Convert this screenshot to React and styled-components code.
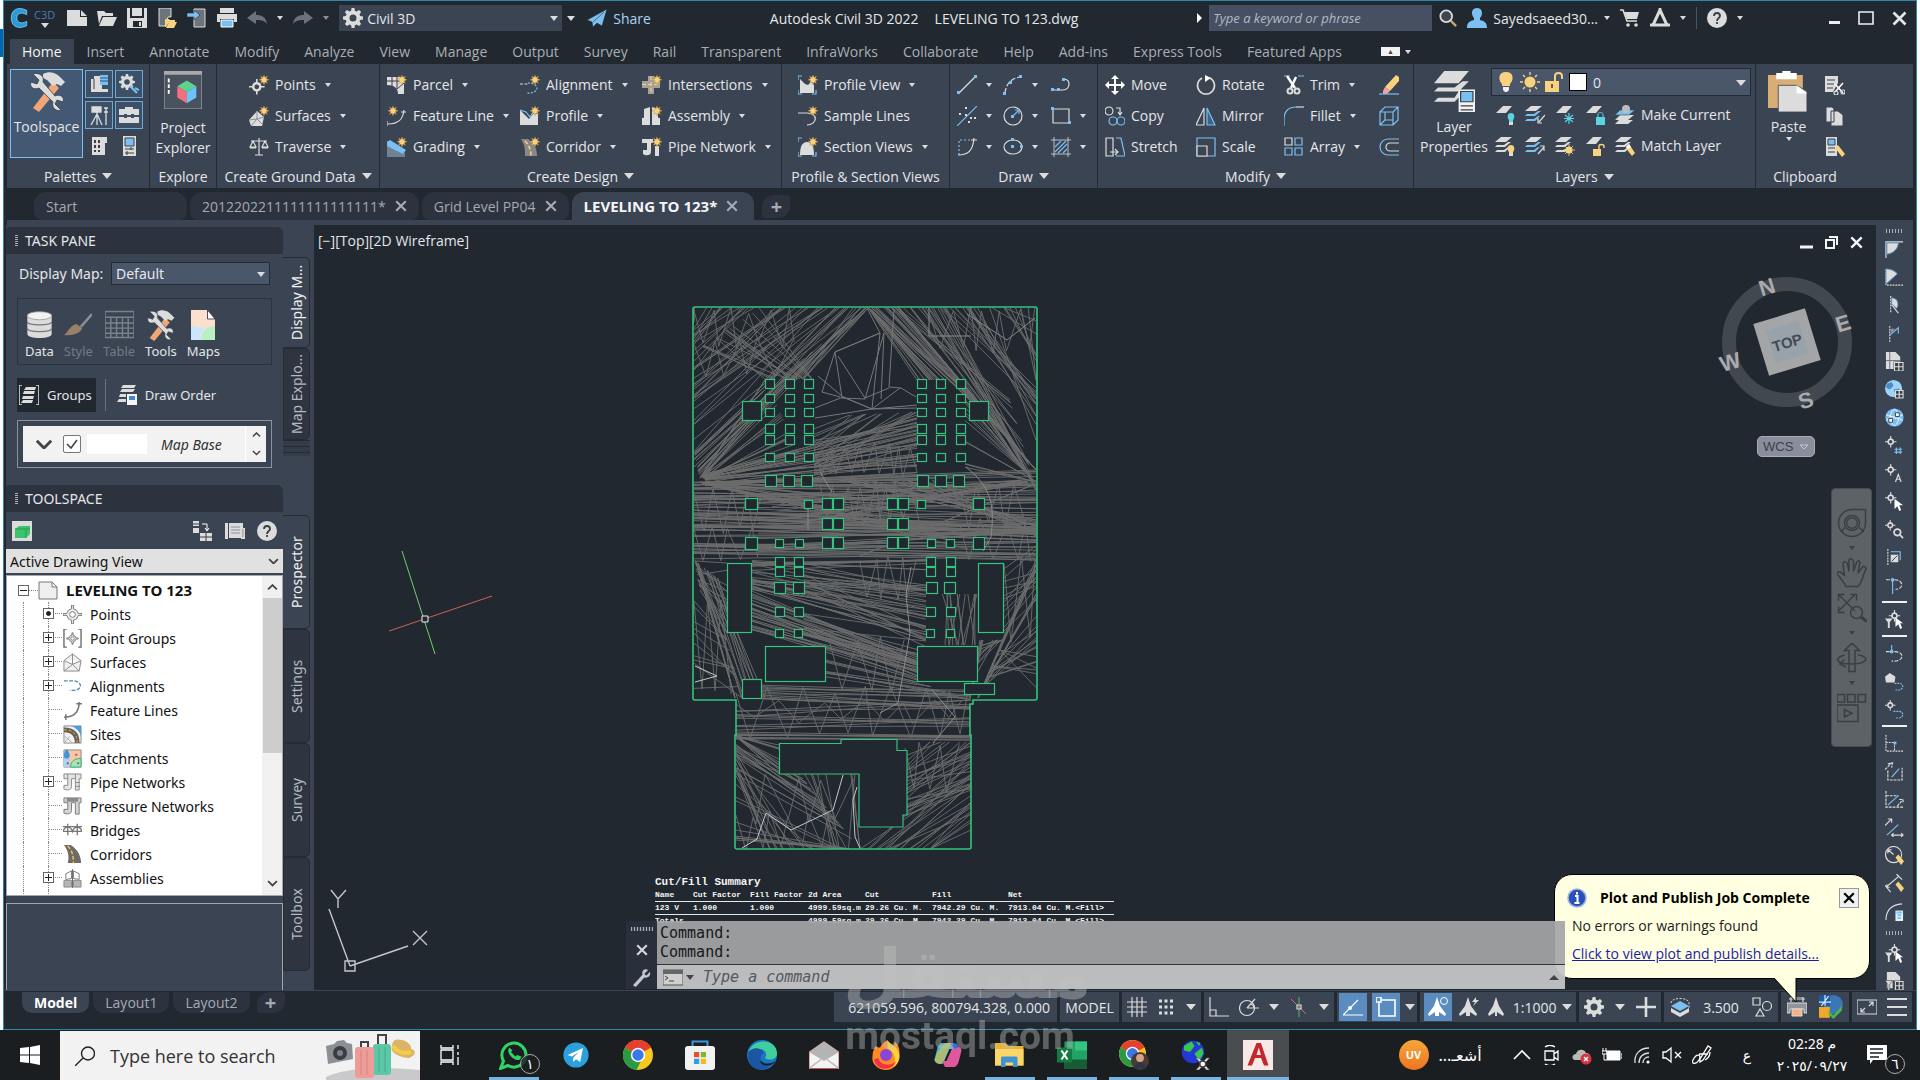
import styled, { createGlobalStyle, css } from "styled-components";

const GlobalStyle = createGlobalStyle`
	* {
		box-sizing: border-box;
	}
	body {
		margin: 0;
		font-family: "Open Sans", "Noto Sans", sans-serif;
		font-size: 14px;
		color: #e4e6e9;
		overflow: hidden;
	}
	button,
	input,
	select {
		font: inherit;
		color: inherit;
		margin: 0;
		padding: 0;
		border: 0;
		background: none;
		border-radius: 0;
	}
	ul {
		list-style: none;
		margin: 0;
		padding: 0;
	}
	svg {
		display: block;
		flex: none;
	}
`;

/* ---------- icons, all on a 20 x 20 grid ---------- */

const W = "#dcdcdc";
const B = "#7cc0f2";
const Y = "#f8d27e";
const G = "#3a3f47";

const line = { fill: "none", stroke: W, strokeWidth: 1.2 };
const blue = { fill: "none", stroke: B, strokeWidth: 1.2 };
const STAR =
	"M15 0l1 2.6 2.4-1.3-1.2 2.5 2.8 1-2.8 1 1.2 2.5-2.4-1.2-1 2.7-1-2.7-2.4 1.2 1.2-2.5-2.8-1 2.8-1-1.2-2.5 2.4 1.3z";
const GEAR =
	"M8.6 0h2.8l.5 2.8 1.7.7L16 1.9l2.1 2.1-1.6 2.4.7 1.7 2.8.5v2.8l-2.8.5-.7 1.7 1.6 2.4-2.1 2.1-2.4-1.6-1.7.7-.5 2.8H8.600l-.5-2.800-1.700-.7L4 18.100 1.900 16l1.600-2.400-.7-1.700L0 11.400V8.600l2.800-.5.7-1.700L1.900 4 4 1.900l2.400 1.600 1.700-.7zM10 6.500a3.500 3.500 0 100 7 3.500 3.500 0 000-7z";
const POINT = "M9 0h2v4a6 6 0 015 5h4v2h-4a6 6 0 01-5 5v4H9v-4a6 6 0 01-5-5H0V9h4a6 6 0 015-5zM10 7a3 3 0 100 6 3 3 0 000-6z";

const Star = () => <path d={STAR} fill={Y} stroke="#c08a3a" strokeWidth=".4" />;
const Sheets = ({ mid = W }) => (
	<>
		<path d="M6 1h11l-6 5H0z" fill={W} />
		<path d="M13 6h3l-6 5H0l2-2h7z" fill={mid} />
		<path d="M13 11h2l-5 5H0l2-2h7z" fill={mid} />
	</>
);

const Wrenches = () => (
	<>
		<path d="M13 5l3 3L6 20l-3-2z" fill="#f0a676" />
		<path d="M8 1c4-2 7 0 9 2l2 2-2 2-2-1-2 1-3-3-2-1z" fill={W} />
		<path d="M3 1l3 3-1 2-3-1C1 8 4 9 6 8l7 7c-1 3 2 5 4 4l-3-3 1-2 3 1c1-3-2-4-4-3L8 5c1-3-2-5-5-4z" fill={W} stroke={G} strokeWidth=".4" />
	</>
);

const ICONS = {
	logo: <path d="M17 3C8-1 3 3 3 10s5 11 14 7v-4c-5 3-9 1-9-3s4-6 9-3z" fill="#2d9ad8" stroke="#6fc8ef" strokeWidth=".8" />,
	newFile: <path d="M0 2h13v7h7v9H0zM14 2l6 6h-6z" fill={W} />,
	open: <path d="M0 3h7l2 2h7v3H5L2 16zM6 9h14l-4 9H2z" fill={W} />,
	save: <path d="M0 0h3v10h14V0h3v20H0zM5 0h10v8H5zM6 13v6h9v-6zM12 14h2v4h-2z" fill={W} fillRule="evenodd" />,
	openWeb: (
		<>
			<path d="M2 0h12v9h-3l-3 9H2z" fill="#6e747c" stroke={W} />
			<path d="M8 11h4l1 1h5v2h-6l-3 5H8zM12 14h8l-3 6H9z" fill={Y} />
		</>
	),
	saveWeb: (
		<>
			<path d="M7 1h11v18H7z" fill="#6e747c" stroke={W} />
			<path d="M0 5h7V2l6 5-6 5V9H0z" fill={B} stroke="#252b34" strokeWidth=".6" />
		</>
	),
	print: (
		<>
			<path d="M3 0h14v5H3zM0 6h20v8h-3v-3H3v3H0z" fill={W} />
			<path d="M4 12h12v7H4z" fill={B} stroke="#fff" />
		</>
	),
	undo: <path d="M9 3v4c6 0 10 2 11 9-2-3-5-4-11-4v4L0 10z" fill="#6b727c" />,
	redo: <path d="M11 3v4C5 7 1 9 0 16c2-3 5-4 11-4v4l9-6z" fill="#6b727c" />,
	gear: <path d={GEAR} fill={W} fillRule="evenodd" />,
	share: <path d="M20 1L0 12l5 2 1 5 4-4 5 3zM17 4L6 14" fill={B} stroke="#252b34" strokeWidth=".6" />,
	find: (
		<>
			<path d="M13 13l6 6" stroke="#c8a47a" strokeWidth="2.600" />
			<circle cx="8" cy="8" r="6.500" fill="#3f454f" stroke={W} strokeWidth="2" />
		</>
	),
	user: <path d="M10 0c4 0 5 3 5 5s-1 4-2 5v2c4 1 7 2 7 8H0c0-6 3-7 7-8v-2C6 9 5 7 5 5s1-5 5-5z" fill={B} />,
	cart: (
		<>
			<path d="M0 2h3l4 11h10" fill="none" stroke={W} strokeWidth="1.600" />
			<path d="M4 4h15l-2 7H7z" fill={W} />
			<circle cx="8" cy="17" r="1.800" fill={W} />
			<circle cx="16" cy="17" r="1.800" fill={W} />
		</>
	),
	autodesk: <path d="M10 2L3 17h14zM10 1v3M1 17h5M14 17h5" fill="none" stroke={W} strokeWidth="3" strokeLinecap="round" />,
	help: (
		<>
			<circle cx="10" cy="10" r="10" fill={W} />
			<path d="M7 8c0-4 6-4 6 0 0 2-3 2-3 5M10 14v2" fill="none" stroke={G} strokeWidth="1.800" />
		</>
	),
	tools: <Wrenches />,
	toolbook: (
		<>
			<path d="M2 5h3v-3h8v13h6v3H2z" fill={W} />
			<path d="M11 1h8v10h-8z" fill={B} />
			<path d="M11 4h8M11 7h8" stroke="#2f5878" />
			<path d="M5 5v10" stroke={G} />
		</>
	),
	gearTool: (
		<>
			<g transform="scale(.8)"><path d={GEAR} fill={W} fillRule="evenodd" /></g>
			<path d="M11 12l7 7M16 14l4 2" stroke={B} strokeWidth="2" />
		</>
	),
	survey: <path d="M3 2h9v5H3zM8 7v4M8 9L2 20M8 9l5 11M8 9v11M15 3h4M17 3v17M15 7h4" fill={W} stroke={W} strokeWidth="1.300" />,
	toolbox: <path d="M6 4V2h8v2h6v6h-5V9h-3v1H8V9H5v1H0V4zM0 12h5v1h3v-1h4v1h3v-1h5v6H0z" fill={W} />,
	sheets: (
		<>
			<path d="M3 1h15v6h-2v12H3z" fill={W} />
			<path d="M6 4v12M10 4v12" stroke={G} strokeWidth="2" strokeDasharray="3 2" />
		</>
	),
	props: (
		<>
			<path d="M4 0h13v20H4z" fill={W} />
			<path d="M6 2h9v8H6z" fill={B} stroke={G} />
			<path d="M6 13h9M6 17h9M12 11v3M8 15v4" stroke={G} />
		</>
	),
	cube: (
		<>
			<path d="M0 0h20v20H0z" fill="#49525e" stroke="#aaa" strokeWidth=".6" />
			<path d="M0 0h20v2H0z" fill="#aaa" />
			<path d="M2 4h1v2H2zM2 7h1v2H2zM2 10h1v2H2z" fill="#fff" />
			<path d="M12 5l5 3-5 3-5-3z" fill="#5cd48c" />
			<path d="M7 8l5 3v6l-5-3z" fill="#f4707e" />
			<path d="M17 8l-5 3v6l5-3z" fill="#6cc4ff" />
		</>
	),
	points: (
		<>
			<g transform="translate(0 4) scale(.78)"><path d={POINT} fill={W} fillRule="evenodd" /></g>
			<Star />
		</>
	),
	surfaces: (
		<>
			<path d="M8 5l7 6-2 9H2l-2-6z" fill={W} />
			<path d="M8 5v8M0 14l8-1 6 6M2 20l6-7 7-2" stroke="#8b8f95" fill="none" />
			<Star />
		</>
	),
	traverse: <path d="M2 4h16M10 1v17M6 18h8M4 4L1 10h6zM16 4l-3 6h6zM1 11h6M13 11h6" {...line} />,
	parcel: (
		<>
			<path d="M0 2h17v17h-6c0-6-4-9-11-9z" fill={W} />
			<path d="M5 2v9M10 2v12M17 8l-7 6M0 6h17" stroke={G} fill="none" />
			<Star />
		</>
	),
	featureLine: (
		<>
			<path d="M1 18c10 0 15-4 16-14M0 15v5M14 6h5" {...line} />
			<g transform="translate(-9 0)"><Star /></g>
		</>
	),
	grading: (
		<>
			<path d="M0 4l18 12v4L0 20z" fill="#6e8294" />
			<path d="M0 5l3-2 16 10-3 4L0 9z" fill={B} />
			<Star />
		</>
	),
	alignment: (
		<>
			<path d="M0 9h8" {...line} strokeDasharray="3 1.500" />
			<path d="M8 8c12 0 12 11-1 10" {...blue} strokeDasharray="2 1.500" />
			<Star />
		</>
	),
	profile: (
		<>
			<path d="M0 4l5 5 4 4 4-5h5v11H0z" fill={W} />
			<path d="M0 4l6 2 4 5 4-6" {...blue} />
			<Star />
		</>
	),
	corridor: (
		<>
			<path d="M1 2h7c7 4 9 11 9 17H5C5 12 5 8 1 2z" fill="#8b8784" />
			<path d="M5 4c4 4 6 9 6 15" stroke={Y} strokeWidth="1.500" strokeDasharray="4 2" fill="none" />
			<Star />
		</>
	),
	intersections: (
		<>
			<path d="M6 1h6v5h6v7h-6v6H6v-6H0V6h6z" fill="#a6a19a" />
			<path d="M9 1v18M0 9.500h18" stroke={Y} strokeDasharray="4 2" />
			<Star />
		</>
	),
	assembly: (
		<>
			<path d="M2 3l6-2v9l-6 2zM0 12l8-2v9H0zM10 1l6 2v9l-6-2zM10 10l8 2v7h-8z" fill={W} />
			<path d="M9 0v20" stroke={G} />
			<Star />
		</>
	),
	pipe: (
		<>
			<path d="M0 2h11v4H9v9c0 4-6 4-8 2v-4h4V6H0zM13 9h4v10h-4z" fill={W} />
			<Star />
		</>
	),
	profileView: (
		<>
			<path d="M0 5V1h4M0 15v4h4M18 15v4h-4" {...blue} />
			<path d="M2 4l5 5 3 1 3-3 3 3v8H2z" fill={W} />
			<Star />
		</>
	),
	sampleLines: (
		<>
			<path d="M0 7h9M9 7c12 0 10 12 0 12" {...line} />
			<Star />
		</>
	),
	sectionViews: (
		<>
			<path d="M0 5V1h4M0 15v4h4M18 15v4h-4" {...blue} />
			<path d="M2 18c0-8 2-13 7-13s7 5 7 13z" fill={W} />
			<Star />
		</>
	),
	drawLine: (
		<>
			<path d="M2 18L18 2" {...line} />
			<path d="M0 16h3v3H0zM17 0h3v3h-3z" fill={B} />
		</>
	),
	drawArc: (
		<>
			<path d="M2 18C3 9 8 3 18 2" {...line} strokeDasharray="5 2" />
			<path d="M0 17h3v3H0zM6 6h3v3H6zM16 0h3v3h-3z" fill={B} />
		</>
	),
	drawPoly: (
		<>
			<path d="M2 15h9c9 0 9-11 2-11" {...line} />
			<path d="M0 13h3v3H0zM6 13h3v3H6zM11 3h3v3h-3z" fill={B} />
		</>
	),
	drawXline: (
		<>
			<path d="M0 20L20 0" {...blue} />
			<path d="M2 7h2v2H2zM8 1h2v2H8zM8 8h2v2H8zM11 15h2v2h-2zM17 11h2v2h-2zM13 11h2v2h-2z" fill={W} />
		</>
	),
	drawCircle: (
		<>
			<circle cx="10" cy="10" r="9" {...line} />
			<path d="M9 11l6-6M12 4h4v4" {...blue} />
			<path d="M8 9h3v3H8z" fill={B} />
		</>
	),
	drawRect: (
		<>
			<path d="M2 3h16v14H2z" {...line} />
			<path d="M0 1h3v3H0zM17 15h3v3h-3z" fill={B} />
		</>
	),
	drawSpline: (
		<>
			<path d="M2 18V3h13" {...blue} strokeDasharray="2 2" />
			<path d="M1 18c10 0 15-4 16-17M14 3h6" {...line} />
		</>
	),
	drawEllipse: (
		<>
			<ellipse cx="10" cy="10" rx="9" ry="7" {...line} />
			<path d="M8 8h3v3H8zM8 1h3v3H8zM17 8h3v3h-3z" fill={B} />
		</>
	),
	drawHatch: (
		<>
			<path d="M0 3h20M0 17h20M3 0v20M17 0v20" {...line} strokeWidth=".8" />
			<path d="M4 10l6-6M4 15L15 4M7 16l9-9M12 16l4-4" {...blue} />
		</>
	),
	move: <path d="M10 0l4 4h-3v5h5V6l4 4-4 4v-3h-5v5h3l-4 4-4-4h3v-5H4v3l-4-4 4-4v3h5V4H6z" fill="#fff" />,
	copy: (
		<>
			<circle cx="4" cy="5" r="4" {...line} />
			<path d="M11 2h4v6M13 6l2 3 2-3" {...line} />
			<circle cx="8" cy="15" r="4" {...blue} />
			<circle cx="16" cy="15" r="4" {...blue} />
		</>
	),
	stretch: (
		<>
			<path d="M1 1h7v18H1z" {...line} />
			<path d="M11 1h5l4 18h-9" {...blue} />
			<path d="M5 15h7M10 12l3 3-3 3" {...line} />
		</>
	),
	rotate: (
		<>
			<path d="M14 3a8.500 8.500 0 11-8 0" {...line} strokeWidth="1.600" />
			<path d="M9 0l6 3-6 4z" fill="#fff" />
		</>
	),
	mirror: (
		<>
			<path d="M8 2v17H0z" {...line} />
			<path d="M11 2v17h8z" {...blue} fill="#3b6489" />
		</>
	),
	scale: (
		<>
			<path d="M1 1h18v18H1z" {...blue} />
			<path d="M1 9h10v10H1z" {...line} fill="#3b4453" />
		</>
	),
	trim: (
		<>
			<path d="M0 1h6M14 1h6" {...blue} />
			<path d="M3 1l8 12M12 2L7 13" stroke="#fff" strokeWidth="2.400" />
			<circle cx="6" cy="16" r="2.500" {...line} strokeWidth="2" />
			<circle cx="13" cy="16" r="2.500" {...line} strokeWidth="2" />
		</>
	),
	fillet: (
		<>
			<path d="M0 20v-7C0 5 5 1 12 1" {...blue} />
			<path d="M12 1h8" {...line} />
		</>
	),
	array: (
		<>
			<path d="M1 1h7v7H1z" {...line} />
			<path d="M11 1h7v7h-7zM1 11h7v7H1zM11 11h7v7h-7z" {...blue} />
		</>
	),
	erase: (
		<>
			<path d="M17 0l3 2v4l-9 10-5-4z" fill={Y} />
			<path d="M6 12l5 4-3 3H4v-3z" fill="#f4a0a8" />
			<path d="M0 19h20" {...blue} />
		</>
	),
	box3d: <path d="M1 6h13v13H1zM1 6l5-5h13l-5 5M19 1v13l-5 5M6 6v8l-5 5M6 14h8" {...blue} />,
	offset: (
		<>
			<path d="M20 2H9a8 8 0 000 16h11" {...blue} />
			<path d="M20 6h-9a4 4 0 000 8h9" {...line} />
		</>
	),
	layerProps: (
		<>
			<path d="M5 0h12l-5 6H0zM14 5h3l-5 5H0l2-2h8zM12 10h3l-5 5H0l2-2h8z" fill={W} />
			<path d="M12 9h8v11h-8z" fill="#f2f2f2" />
			<path d="M13 10h6v5h-6z" fill={B} stroke={G} strokeWidth=".6" />
			<path d="M13 17h6M13 19h6" stroke={G} strokeWidth=".6" />
		</>
	),
	bulb: (
		<>
			<path d="M10 0c8 0 8 8 4 12v2H6v-2C2 8 2 0 10 0z" fill={Y} />
			<path d="M7 15h6v3l-2 2H9l-2-2z" fill="#f2f2f2" />
		</>
	),
	sun: (
		<>
			<circle cx="10" cy="10" r="5.500" fill={Y} />
			<path d="M10 0v3M10 17v3M0 10h3M17 10h3M3 3l2 2M15 15l2 2M17 3l-2 2M5 15l-2 2" stroke={Y} strokeWidth="1.400" />
		</>
	),
	unlock: (
		<>
			<path d="M1 9h14v11H1z" fill={Y} />
			<path d="M11 9V4c0-4 7-4 7 0v3" fill="none" stroke={Y} strokeWidth="2" />
			<path d="M8 12v4" stroke={G} strokeWidth="1.600" />
		</>
	),
	layOff: (
		<>
			<path d="M8 1h9l-6 7H1z" fill={W} />
			<path d="M16 8c4 0 4 5 2 7v2h-4v-2c-2-2-2-7 2-7z" fill="#5cd3e0" />
			<path d="M14 17h4v3h-4z" fill={W} />
		</>
	),
	layIso: (
		<>
			<Sheets mid={B} />
			<path d="M20 10l-6 7M13 13v5h4" {...line} />
		</>
	),
	layFreeze: (
		<>
			<path d="M8 1h9l-6 7H1z" fill={W} />
			<path d="M14 8v11M10 10l8 7M18 10l-8 7M9 13.500h10" stroke="#5cd3e0" strokeWidth="1.200" />
		</>
	),
	layLock: (
		<>
			<path d="M8 1h9l-6 7H1z" fill={W} />
			<path d="M11 12h9v8h-9z" fill="#5cd3e0" />
			<path d="M13 12V9c0-2 5-2 5 0v3" fill="none" stroke="#5cd3e0" />
		</>
	),
	layCurrent: (
		<>
			<path d="M5 10h14l-6 5H0zM4 15h14l-5 4H0z" fill={W} />
			<path d="M5 5h15l-6 5H0z" fill={B} stroke="#3b4453" strokeWidth=".6" />
			<circle cx="11" cy="4" r="4" fill="#b9bdc2" />
		</>
	),
	layOn: (
		<>
			<Sheets />
			<path d="M16 9c4 0 4 5 2 7v1h-4v-1c-2-2-2-7 2-7z" fill={Y} />
			<path d="M14 17h4v3h-4z" fill={W} />
		</>
	),
	layUniso: (
		<>
			<Sheets mid={B} />
			<path d="M13 18l6-7M15 10h4v5" {...line} />
		</>
	),
	layThaw: (
		<>
			<Sheets />
			<circle cx="14" cy="14" r="3.500" fill={Y} />
			<path d="M14 8v12M8 14h12M10 10l8 8M18 10l-8 8" stroke={Y} strokeWidth=".8" />
		</>
	),
	layUnlock: (
		<>
			<path d="M8 1h9l-6 7H1z" fill={W} />
			<path d="M8 13h8v7H8z" fill={Y} />
			<path d="M14 13v-3c0-2 5-2 5 0v2" fill="none" stroke={Y} strokeWidth="1.400" />
		</>
	),
	layMatch: (
		<>
			<Sheets />
			<path d="M11 11l3-3 2 3 4 6-3 3-4-5z" fill={Y} />
			<path d="M11 11l3-3 2 3-3 2z" fill="#fff" />
		</>
	),
	paste: (
		<>
			<path d="M0 2h17v16H0z" fill="#d8ae74" />
			<path d="M4 1h3V0h4v1h3v3H4z" fill="#fff" />
			<path d="M5 7h9l5 3v10H5z" fill={W} stroke="#3b4453" strokeWidth=".4" />
			<path d="M14 7l5 4h-5z" fill="#fff" />
		</>
	),
	cut: (
		<>
			<path d="M0 1h13v7l-5 9H0z" fill={W} />
			<path d="M2 5h8M2 9h7M2 13h6" stroke={G} />
			<path d="M10 9l8 9M18 8l-8 9" stroke="#fff" strokeWidth="1.600" />
			<circle cx="11" cy="18" r="2" {...line} />
			<circle cx="18" cy="17" r="2" {...line} />
		</>
	),
	copyClip: <path d="M1 1h6l2 2v13H1zM6 5h7l5 4v11H6z" fill={W} stroke="#3b4453" />,
	matchProps: (
		<>
			<path d="M1 0h11v19H1z" fill={W} />
			<path d="M3 2h7v6H3z" fill={B} stroke={G} />
			<path d="M3 11h7M3 15h7" stroke={G} />
			<path d="M10 11l3-3 7 9-3 3z" fill={Y} />
		</>
	),
	database: (
		<>
			<path d="M1 3v14c0 4 18 4 18 0V3z" fill={W} />
			<path d="M1 8c0 3 18 3 18 0M1 13c0 3 18 3 18 0" fill="none" stroke="#777" />
			<ellipse cx="10" cy="3.500" rx="9" ry="3" fill="#f2f2f2" stroke="#999" strokeWidth=".6" />
		</>
	),
	brush: (
		<>
			<path d="M20 3l-8 9" stroke="#8b8f95" strokeWidth="1.800" />
			<path d="M13 13c-2 4-6 5-13 5 3-2 4-7 9-8z" fill="#9a8068" />
		</>
	),
	table: <path d="M0 1h20v18H0zM0 5h20M0 9h20M0 12.500h20M0 16h20M4 5v14M8 5v14M12 5v14M16 5v14" fill="none" stroke="#7b818b" />,
	maps: (
		<>
			<path d="M2 0h11l5 6v14H2z" fill="#fbe0cd" />
			<path d="M2 10c4 2 6 2 9 1l-3 9H2z" fill="#cbe6fb" />
			<path d="M18 11c-6 0-9 3-9 9h9z" fill="#b8f0c4" />
			<path d="M13 0v6h5z" fill="#fff" stroke={G} strokeWidth=".6" />
		</>
	),
	groups: (
		<>
			<path d="M3 0H0v20h3M17 0h3v20h-3" {...line} strokeWidth="1.600" />
			<path d="M7 2h10l-1 3H5zM5 6h11l-1 3H4zM4 11h11l-1 3H3zM4 15h10l-1 3H2z" fill={W} />
		</>
	),
	drawOrder: (
		<>
			<path d="M6 0h13l-2 3H4zM5 4h13l-2 3H3zM3 9h6v3H2zM2 14h7v3H0z" fill={W} />
			<path d="M10 9h10v11H10z" fill="#f4f4f4" />
			<path d="M12 11h6v4h-6z" fill="#4285c8" />
		</>
	),
	greenCube: (
		<>
			<path d="M0 0h20v20H0z" fill={W} />
			<path d="M3 8l4-3h11v8l-4 4H3z" fill="#3cc46c" />
			<path d="M14 17V8h4M3 8h11" fill="none" stroke="#1f9848" strokeWidth=".8" />
		</>
	),
	treeView: (
		<>
			<path d="M0 0h6v5H0zM0 7h6v5H0zM7 12h12v8H7z" fill={W} />
			<path d="M9 3h5v6M12 7l2 3 2-3" stroke="#fff" fill="none" />
			<path d="M7 16h12M13 12v8M0 3h6" stroke={G} />
		</>
	),
	panorama: (
		<>
			<path d="M0 2h3v16H0zM4 2h14v5h2v11h-4v-1H4z" fill={W} />
			<path d="M6 6h9M6 9h9M6 12h9M18 8v8" stroke="#8b8f95" />
		</>
	),
	docSheet: <path d="M1 2h13l5 5v12H1zM14 2v5h5" fill="#efefef" stroke="#777" />,
	tPoints: <path d={POINT} fill="#ececec" stroke="#777" fillRule="evenodd" />,
	tPointGroups: (
		<>
			<path d="M4 0H1v19h3M16 0h3v19h-3" fill="none" stroke="#666" strokeWidth="1.400" />
			<g transform="translate(4 4) scale(.6)"><path d={POINT} fill="#ececec" stroke="#777" strokeWidth="1.600" fillRule="evenodd" /></g>
		</>
	),
	tSurfaces: <path d="M10 1l9 7-2 11H1V8zM10 1v11M1 8l9 4 9-4M1 19l9-7 7 7" fill="#f0f0f0" stroke="#888" />,
	tAlignments: <path d="M1 4h9c11 0 11 10 1 10H7" fill="none" stroke="#5b87a8" strokeWidth="1.400" strokeDasharray="4 1.500" />,
	tFeature: <path d="M1 17c10 0 16-4 16-16M14 3h6M3 14v6" fill="none" stroke="#777" strokeWidth="1.600" />,
	tSites: (
		<>
			<path d="M1 1h18v18H1z" fill="#f2f2f2" stroke="#888" />
			<path d="M9 1h10v12c-1-6-4-9-10-12z" fill="#4a9ee0" />
			<path d="M1 5c9 0 14 4 14 14" fill="none" stroke="#666058" strokeWidth="5" />
			<path d="M1 5c9 0 14 4 14 14" fill="none" stroke="#e8b040" strokeDasharray="3 2" />
			<path d="M2 12l7 6M2 18l5-6" stroke="#aaa" />
		</>
	),
	tCatch: (
		<>
			<path d="M1 1h18v18H1z" fill="#f8c8a4" stroke="#888" />
			<path d="M1 9l6 1v9H1z" fill="#a9d4f4" />
			<path d="M19 10c-7 0-11 3-11 9h11z" fill="#9ee8b4" stroke="#4a8" />
			<path d="M4 0c5 7 3 10 0 10s-5-3 0-10z" fill="#3c94dc" />
			<path d="M13 5h2v2h-2zM15 14h2v2h-2zM4 14h2v2H4z" fill="#a55" />
		</>
	),
	tPipe: (
		<>
			<path d="M1 1h18v5h-2v12h-4V6H9v8c0 5-6 4-8 3v-4h4V6H1z" fill="#e4e4e4" stroke="#888" />
			<path d="M13 10h5M13 14h5M5 1v5M13 1v5" stroke="#888" />
		</>
	),
	tPressure: (
		<>
			<path d="M1 1h18v5h-2v12h-4V6H9v8c0 5-6 4-8 3v-4h4V6H1z" fill="#d4d4d4" stroke="#777" />
			<path d="M4 1h12v4H4z" fill="#8a8a8a" />
		</>
	),
	tBridges: <path d="M0 6h20M0 11h20M5 3v12M15 3v12M0 11c2-6 8-6 10 0 2-6 8-6 10 0" fill="none" stroke="#777" strokeWidth="1.400" />,
	tCorridors: (
		<>
			<path d="M1 0h7c8 5 11 12 11 19H5C7 12 5 5 1 0z" fill="#6e6a66" />
			<path d="M5 1c5 5 6 11 6 18" stroke="#f0c040" strokeWidth="1.600" strokeDasharray="4 2" fill="none" />
		</>
	),
	tAssemblies: (
		<>
			<path d="M3 5l6-3v8l-6 1zM17 5l-6-3v8l6 1z" fill="#fff" stroke="#777" />
			<path d="M1 12h8v7H1zM11 12h8v7h-8z" fill="#b5b5b5" stroke="#888" />
			<path d="M10 0v20" stroke="#666" />
		</>
	),
	/* right hand toolbar */
	r1: (
		<>
			<path d="M1 19V2h18" {...line} />
			<path d="M2 3h12c0 6-5 11-12 12z" fill={W} stroke="#5c94c4" />
		</>
	),
	r2: (
		<>
			<path d="M1 1v17h18" {...line} strokeDasharray="2 1" />
			<path d="M1 1c5 0 9 2 12 5L1 17z" fill={W} stroke="#5c94c4" />
		</>
	),
	r3: (
		<>
			<path d="M6 0v18" {...line} strokeDasharray="2 1" />
			<path d="M7 2c7 0 8 8 5 11l-5-5z" fill={W} stroke="#5c94c4" />
			<path d="M7 9l7 9" {...line} />
		</>
	),
	r4: (
		<>
			<path d="M5 2v18" {...line} strokeDasharray="2 1" />
			<path d="M5 12l9-8v6" {...blue} />
			<path d="M6 5h5l-5 5z" fill="#8b97a3" />
		</>
	),
	pageGrid: (
		<>
			<path d="M1 0h10l5 5v5H9v8H1z" fill={W} />
			<path d="M1 9h15M5 0v18" stroke="#6a7078" />
			<path d="M10 11h9v9h-9zM14.500 11v9M10 15.500h9" {...line} fill={G} />
		</>
	),
	globeGrid: (
		<>
			<circle cx="9" cy="9" r="9" fill="#9fd4fa" />
			<path d="M2 4l5-2 2 4-4 4-4-2zM9 10l6-1 1 5-4 3z" fill="#4b8cc2" />
			<path d="M11 11h8v8h-8zM15 11v8M11 15h8" {...line} fill={G} />
		</>
	),
	globeNet: (
		<>
			<circle cx="10" cy="10" r="9.500" fill="#7cc0f2" />
			<path d="M1 7c6 3 12 3 18 0M1 13c6-3 12-3 18 0M10 1c-6 5-6 13 0 18M10 1c6 5 6 13 0 18" fill="none" stroke="#e8f5ff" />
			<path d="M11 5h4v4h-4zM4 11h4v4H4z" fill="#fff" stroke={G} />
		</>
	),
	ptGrid: (
		<>
			<g transform="scale(.6)"><path d={POINT} fill={W} fillRule="evenodd" /></g>
			<path d="M12 12v7M16 12v7M10 14h8M10 17h8" {...blue} />
		</>
	),
	ptText: (
		<>
			<g transform="scale(.6)"><path d={POINT} fill={W} fillRule="evenodd" /></g>
			<path d="M11 19l3-8 3 8M12 16h4" {...line} />
		</>
	),
	ptArrow: (
		<>
			<g transform="scale(.6)"><path d={POINT} fill={W} fillRule="evenodd" /></g>
			<path d="M10 7l9 7h-4l2 5-2 1-2-5-3 3z" fill="#fff" />
		</>
	),
	ptZoom: (
		<>
			<g transform="scale(.55)"><path d={POINT} fill={W} fillRule="evenodd" /></g>
			<circle cx="13" cy="13" r="3.500" {...line} strokeWidth="1.800" />
			<path d="M16 16l3 3" {...line} strokeWidth="1.800" />
		</>
	),
	r12: (
		<>
			<path d="M3 1v18" {...line} strokeDasharray="2 1" />
			<path d="M6 4h10v9" {...blue} />
			<path d="M6 7h8v8H6z" fill={W} />
			<path d="M7 14l6-6" stroke={G} />
		</>
	),
	r13: (
		<>
			<path d="M1 4h5M10 4c10 0 10 10 1 10" {...line} strokeDasharray="4 1.500" />
			<path d="M8 4v15" {...blue} />
			<circle cx="8" cy="4" r="2" fill={B} />
		</>
	),
	ptFilter: (
		<>
			<g transform="translate(4 0) scale(.6)"><path d={POINT} fill={W} fillRule="evenodd" /></g>
			<path d="M0 9h8l-3 4v6H3v-6z" fill={W} />
			<path d="M11 8l8 6h-3l2 5-2 1-2-5-3 3z" fill="#fff" />
		</>
	),
	r15: (
		<>
			<path d="M1 8h5M10 8c11 0 10 10 0 10H7" {...line} strokeDasharray="4 1.500" />
			<path d="M7 1v8" {...blue} />
			<circle cx="7" cy="8" r="2" fill={B} />
		</>
	),
	r16: (
		<>
			<path d="M5 1l6 4-1 6H1L0 5z" fill={W} />
			<path d="M10 12h5c5 0 5 7-1 7h-3" {...blue} strokeDasharray="2 1" />
		</>
	),
	r17: (
		<>
			<g transform="scale(.55)"><path d={POINT} fill={W} fillRule="evenodd" /></g>
			<path d="M9 12h6c5 0 5 7-1 7h-3" {...blue} strokeDasharray="2 1" />
		</>
	),
	r18: (
		<>
			<path d="M1 1v17h18M1 9h9v9" {...line} strokeDasharray="2 1" />
			<path d="M9 8h3v3H9z" fill={B} />
		</>
	),
	r19: (
		<>
			<path d="M3 9v10h15V6M0 8l7-7M3 2l5-1-1 5" {...line} strokeDasharray="3 1" />
			<path d="M7 16l8-9" {...blue} />
		</>
	),
	r20: (
		<>
			<path d="M1 1v17h18M1 6h13M13 17l6-7M15 10h4v4" {...line} strokeDasharray="3 1" />
			<path d="M3 16L14 6" {...blue} />
		</>
	),
	r21: (
		<>
			<path d="M0 8l7-7M3 1h4v4M7 18h12M9 16l-2 2 2 2M17 16l2 2-2 2" {...line} />
			<path d="M2 18L14 7" {...blue} />
		</>
	),
	r22: (
		<>
			<circle cx="9" cy="9" r="8.500" {...line} />
			<path d="M9 9L3 4M3 8V4h4" {...line} />
			<path d="M11 12l3-3 6 7-3 4z" fill={Y} />
		</>
	),
	r23: (
		<>
			<path d="M1 14L15 2M0 12l6 7M12 0l6 6M5 14H2v-3" {...line} />
			<path d="M11 11l3-3 6 7-3 4z" fill={Y} />
		</>
	),
	r24: (
		<>
			<path d="M1 19C1 9 7 3 18 2" {...line} />
			<path d="M11 9h8v11h-8z" fill="#e4f2fb" />
			<path d="M12 11h6M13 14h4M13 17h4" stroke={B} strokeWidth="2" />
		</>
	),
	r26: (
		<>
			<path d="M2 0h9l5 5v4H8v8H2z" fill={W} />
			<path d="M0 9h8l-3 4v7H3v-7z" fill={W} stroke={G} strokeWidth=".6" />
			<path d="M11 10h8v9h-8zM15 10v9M11 14.500h8" {...line} fill={G} />
		</>
	),
	/* status bar */
	grid: <path d="M5 0v20M10 0v20M15 0v20M0 5h20M0 10h20M0 15h20" {...line} />,
	snap: <path d="M3 4h14M3 10h14M3 16h14" fill="none" stroke={W} strokeWidth="3" strokeDasharray="3 2.500" />,
	ortho: <path d="M1 0v19h19M1 13h6v6" {...line} />,
	polar: (
		<>
			<circle cx="8" cy="11" r="7.500" {...line} />
			<path d="M8 11h12M8 11l8-9M12 7c2 1 3 3 3 4" {...line} />
		</>
	),
	iso: (
		<>
			<path d="M10 0v20" stroke="#59b86f" />
			<path d="M2 2l15 15" stroke="#d26b6b" />
			<path d="M8 8h4v4H8z" {...line} />
		</>
	),
	otrack: (
		<>
			<path d="M0 18h20M0 18L15 3" {...line} stroke="#fff" />
			<circle cx="7" cy="11" r="2" fill="#fff" />
		</>
	),
	osnap: <path d="M3 5v14h16V3H5M0 0h5v5H0z" {...line} stroke="#fff" strokeWidth="1.600" />,
	annoVis: (
		<>
			<path d="M9 0l3 9 6 8-1 2-6-4v4H7v-4l-6 4-1-2 6-8z" fill="#fff" />
			<circle cx="16" cy="4" r="3.500" fill="none" stroke="#fff" />
		</>
	),
	annoAuto: (
		<>
			<path d="M9 0l3 9 6 8-1 2-6-4v4H7v-4l-6 4-1-2 6-8z" fill={W} />
			<path d="M17 0l-4 5h3l-2 4 6-6h-3z" fill={W} />
		</>
	),
	anno: <path d="M10 0l3 9 5 8-1 2-6-4v4H9v-4l-6 4-1-2 5-8z" fill={W} />,
	plus: <path d="M10 0v20M0 10h20" stroke={W} strokeWidth="2.600" />,
	elevation: (
		<>
			<path d="M1 6c0-6 18-6 18 0v5" fill="none" stroke={W} strokeDasharray="2 1.500" />
			<path d="M10 4l9 5-9 5-9-5z" fill={B} />
			<path d="M1 11l9 5 9-5v4l-9 5-9-5z" fill={W} />
		</>
	),
	shapes: (
		<>
			<path d="M1 1h7v7H1zM12 19L8 12l-4 7z" {...line} />
			<circle cx="15" cy="9" r="4.500" {...line} />
		</>
	),
	plotter: (
		<>
			<path d="M2 2h16M4 5V0h12v5" {...line} />
			<path d="M0 6h20v10h-3v-4H3v4H0z" fill="#8e949c" stroke={W} />
			<path d="M5 12h10v7H5z" fill="#f4b183" stroke={W} />
		</>
	),
	shield: (
		<>
			<circle cx="12" cy="8" r="8" fill="#3a76b8" />
			<path d="M0 0h9v9H0z" fill="#1d5b9e" />
			<path d="M5 0v9M0 6h10M2 9l6-8" stroke="#d6ecff" />
			<path d="M0 10h9v9H0z" fill="#f2a82a" />
			<path d="M8 13l4 4 7-8v4l-7 7-4-4z" fill="#4ab848" />
		</>
	),
	clean: <path d="M0 3h20v14H0zM12 9l4-4M12 5h4v4M8 11l-4 4M8 15H4v-4" {...line} />,
	menu: <path d="M0 2h20M0 10h20M0 18h20" stroke={W} strokeWidth="2" />,
	wrench: <path d="M19 3l-4 4-2-2 4-4c-4-2-7 1-6 5L1 17l3 2 9-10c4 1 7-2 6-6z" fill="#c4c7cb" />,
	prompt: (
		<>
			<path d="M0 3h20v15H0z" fill="#d0d0d0" stroke="#555" />
			<path d="M0 3h20v4H0z" fill="#666" />
			<path d="M2 9l3 2-3 2M6 14h5" fill="none" stroke="#444" />
		</>
	),
	/* taskbar */
	windows: <path d="M0 3l9-1v7.500H0zM10 2l10-2v9.500H10zM0 10.500h9V18l-9-1zM10 10.500h10V20l-10-2z" fill="#fff" />,
	taskSearch: (
		<>
			<circle cx="13" cy="7.500" r="6.500" fill="none" stroke="#222" strokeWidth="1.400" />
			<path d="M8 12l-8 8" stroke="#222" strokeWidth="1.400" />
		</>
	),
	taskView: <path d="M1 5h12v10H1zM1 0v3h12V0M1 20v-3h12v3M18 0v4M18 7v3M18 12v8" fill="none" stroke="#fff" strokeWidth="1.300" />,
	whatsapp: (
		<>
			<path d="M1 19l2-5a8 8 0 113 3z" fill="#1b1e20" stroke="#2fd366" strokeWidth="2" />
			<path d="M7 5c-3 3 3 10 7 8l1-2-3-1-1 1-3-3 1-1z" fill="#2fd366" />
		</>
	),
	telegram: (
		<>
			<circle cx="10" cy="10" r="9" fill="#2ba0dc" />
			<path d="M4 10l11-5-2 10-3-2-2 2v-3l4-4-5 3z" fill="#fff" />
		</>
	),
	chrome: (
		<>
			<circle cx="10" cy="10" r="10" fill="#f9c81c" />
			<path d="M10 10L1.300 5A10 10 0 0118.700 5z" fill="#e5402f" />
			<path d="M1.300 5A10 10 0 009 20l4-8z" fill="#2b9a45" />
			<circle cx="10" cy="10" r="4.800" fill="#fff" />
			<circle cx="10" cy="10" r="3.800" fill="#3b78e7" />
		</>
	),
	store: (
		<>
			<path d="M5 5V1h10v4" fill="none" stroke="#3b96d8" strokeWidth="1.400" />
			<rect y="4" x="0" width="20" height="16" rx="2" fill="#f2f2f2" />
			<path d="M6 8h3.500v3.500H6z" fill="#e5502f" />
			<path d="M10.500 8H14v3.500h-3.500z" fill="#80b82c" />
			<path d="M6 12.500h3.500V16H6z" fill="#2ba0e8" />
			<path d="M10.500 12.500H14V16h-3.500z" fill="#f8b81c" />
		</>
	),
	edge: (
		<>
			<circle cx="10" cy="10" r="10" fill="#1c74c8" />
			<path d="M1 8C4-2 20-1 20 9c0 4-5 5-8 3 2-3 0-6-4-6-3 0-5 1-7 2z" fill="#3fcf9c" />
			<path d="M1 8c3-4 9-3 10 1-3 1-4 8 4 9C6 23-1 16 1 8z" fill="#1a56a4" />
			<path d="M9 11c-1 5 6 6 10 3-2 4-8 4-10 1z" fill="#1b1e20" />
		</>
	),
	mail: (
		<>
			<path d="M0 8l10-7 10 7v11H0z" fill="#f4f4f4" stroke="#d84848" strokeWidth=".6" />
			<path d="M0 8l10-7 10 7-10 6z" fill="#b4b4b4" />
			<path d="M0 19l8-6M20 19l-8-6" stroke="#bbb" fill="none" />
		</>
	),
	firefox: (
		<>
			<path d="M3 4c1 1 2 1 3 1 1-2 3-4 5-5 1 3 2 3 4 4l1-3c3 3 3 6 3 8 0 7-4 11-9 11S0 16 1 11c0-3 1-5 2-7z" fill="#ff8a1f" />
			<path d="M11 0c1 3 8 4 8 11 0 3-2 6-4 7 3-8-2-12-4-12z" fill="#ffd23c" />
			<path d="M2 13c2 8 12 8 15 1-4 4-11 3-12-2z" fill="#f2304c" />
			<circle cx="10" cy="10" r="4" fill="#8a46d8" />
		</>
	),
	copilot: (
		<>
			<path d="M6 2h6l2 4h-3L7 15c-1 2-6 1-6-2l2-8c1-2 2-3 3-3z" fill="#39b4c8" />
			<path d="M3 8l5-6h4L7 15c-2 2-6 0-6-2z" fill="#f4c23c" opacity=".6" />
			<path d="M14 18H8l-2-4h3l4-9c1-2 6-1 6 2l-2 8c-1 2-2 3-3 3z" fill="#e0589c" />
			<path d="M12 2h2c2 0 3 2 3 3l-3 1z" fill="#3a6cd8" />
		</>
	),
	explorer: (
		<>
			<path d="M0 2h7l2 2h10v13H0z" fill="#e8b234" />
			<path d="M0 6h19v11H0z" fill="#fbd668" />
			<path d="M4 18v-6c0-1 1-1 1-1h9c1 0 1 1 1 1v6h-3v-3H7v3z" fill="#3f94d8" />
		</>
	),
	excel: (
		<>
			<path d="M5 1h15v18H5z" fill="#21a366" />
			<path d="M12 1h8v6h-8z" fill="#33c481" />
			<path d="M5 13h15v6H5z" fill="#185c37" />
			<path d="M0 5h10v10H0z" fill="#107c41" />
			<path d="M3 7l4 6M7 7l-4 6" stroke="#fff" strokeWidth="1.400" />
		</>
	),
	chromeUser: (
		<>
			<circle cx="9" cy="9" r="9" fill="#f9c81c" />
			<path d="M9 9L1 5a9 9 0 0116 0z" fill="#e5402f" />
			<path d="M1 5a9 9 0 008 13l3-8z" fill="#2b9a45" />
			<circle cx="9" cy="9" r="4.500" fill="#fff" />
			<circle cx="9" cy="9" r="3.600" fill="#3b78e7" />
			<circle cx="14" cy="14" r="6" fill="#4a3a34" />
			<circle cx="14" cy="12" r="2.600" fill="#d8a488" />
			<path d="M10 19c0-5 8-5 8 0z" fill="#2c3648" />
		</>
	),
	globe: (
		<>
			<circle cx="8" cy="8" r="7.500" fill="#2438d8" />
			<path d="M2 4l5-3 2 3-3 4-4-1zM9 9l5-4 1 4-3 5zM10 1l3 1-1 2z" fill="#38c848" />
			<path d="M10 12h2l7 8h-2zM19 12h-2l-7 8h2z" fill="#ddd" stroke="#555" strokeWidth=".4" />
			<circle cx="14.500" cy="16" r="2" fill="#fff" stroke="#444" />
		</>
	),
	autocad: (
		<>
			<path d="M0 0h20v20H0z" fill="#f9e9e6" />
			<path d="M3 17L9 2h3l5 15h-3l-2-5H8l-2 5zM9 10h3l-1.500-5z" fill="#c1272d" fillRule="evenodd" />
		</>
	),
	chevronUp: <path d="M2 14l8-8 8 8" fill="none" stroke="#fff" strokeWidth="1.600" />,
	meet: <path d="M3 6h9v9H3zM12 9l4-3v9l-4-3M3 2c3-2 7-2 10 0M3 19c3 2 7 2 10 0" fill="none" stroke="#fff" strokeWidth="1.300" />,
	cloud: (
		<>
			<path d="M3 15c-4-1-3-6 1-6 1-5 8-6 10-1 5 0 6 6 2 7z" fill="#b9b9b9" />
			<circle cx="14" cy="14" r="5.500" fill="#d8343c" />
			<path d="M12 12l4 4M16 12l-4 4" stroke="#fff" strokeWidth="1.400" />
		</>
	),
	battery: (
		<>
			<path d="M5 6h13v9H5z" fill="#fff" stroke="#fff" />
			<path d="M19 9h1v4h-1M1 3v3M4 3v3M0 6h5v3H0zM2 9v6h3" fill="none" stroke="#fff" />
		</>
	),
	wifi: (
		<>
			<path d="M3 18C2 9 8 3 17 3M7 18c0-6 4-10 10-10M11 18c0-3 2-6 6-6" fill="none" stroke="#ddd" strokeWidth="1.300" />
			<circle cx="16" cy="17" r="1.600" fill="#fff" />
		</>
	),
	mute: <path d="M1 7h3l5-4v14l-5-4H1zM13 7l6 6M19 7l-6 6" fill="none" stroke="#fff" strokeWidth="1.300" />,
	pen: <path d="M1 15c4-8 9-5 6 0s-8 4-6 0M8 14L16 1l3 2-8 12-3 2zM7 9h9M13 15c4-2 5-5 5-8" fill="none" stroke="#fff" strokeWidth="1.300" />,
	notify: (
		<>
			<path d="M0 0h20v15H6l-3 4v-4H0z" fill="#fff" />
			<path d="M3 4h13M3 8h13M3 12h9" stroke="#1b1e20" strokeWidth="1.400" />
		</>
	),
	info: (
		<>
			<circle cx="10" cy="10" r="9" fill="#2a4fb8" stroke="#9fb4e0" strokeWidth="1.600" />
			<path d="M10 4v2.500M8 8h2.500v7M7.500 15h5" fill="none" stroke="#fff" strokeWidth="2" />
		</>
	),
	wheel: (
		<>
			<path d="M10 1h9v9a9 9 0 11-9-9z" fill="none" stroke={G} />
			<circle cx="10" cy="10" r="5" fill="none" stroke={G} />
			<circle cx="10" cy="10" r="3.500" fill="none" stroke={G} />
			<path d="M5 13l-2 3M15 13l3 3" stroke={G} />
		</>
	),
	hand: <path d="M6 19C4 15 1 12 0 10c1-2 4 0 5 2L4 4c0-2 2-2 3 0l1 5V2c0-2 2-2 3 0v7l2-6c1-2 3-1 2 1l-1 6 3-4c1-1 3 0 2 2-2 4-2 8-5 11z" fill="none" stroke={G} />,
	zoomExt: (
		<>
			<path d="M1 1l11 11M12 1L1 12M1 5V1h4M9 1h4v4M1 9v4h4" fill="none" stroke={G} />
			<circle cx="13" cy="13" r="4" fill="none" stroke={G} />
			<path d="M16 16l4 3" stroke={G} strokeWidth="2" />
		</>
	),
	orbit: <path d="M8 19V5H5l5-5 5 5h-3v14zM5 8c-7 2-6 6 4 6 12 0 13-5 5-6M5 11l-3 3 4 2" fill="none" stroke={G} />,
	motion: <path d="M0 1h5v5H0zM7 1h5v5H7zM14 1h5v5h-5zM0 8h14v11H0zM5 11l5 2.500-5 2.500z" fill="none" stroke={G} />,
};

const Icon = ({ name, size = 20, h }) => (
	<svg width={size} height={h || size} viewBox="0 0 20 20" aria-hidden="true">
		{ICONS[name]}
	</svg>
);

const Caret = styled.i`
	flex: none;
	width: 0;
	height: 0;
	border: ${(p) => p.$s || 3}px solid transparent;
	border-top: ${(p) => (p.$s || 3) + 1}px solid ${(p) => p.$c || "#dcdcdc"};
	border-bottom: 0;
`;

/* ---------- frame ---------- */

const Desktop = styled.div`
	display: flex;
	flex-direction: column;
	height: 100vh;
	background: #fff linear-gradient(#fff 29px, #0667b0 29px 57px, #fff 57px) no-repeat 0 0 / 3px 100%;
`;

const Frame = styled.div`
	position: relative;
	flex: 1;
	min-height: 0;
	display: flex;
	flex-direction: column;
	margin: 0 3px;
	border: 1px solid #2f86ab;
	background: #212830;
`;

const TitleBar = styled.header`
	height: 38px;
	padding: 3px 9px 7px 4px;
	display: flex;
	align-items: center;
	justify-content: space-between;
`;

const Bar = styled.div`
	display: flex;
	align-items: center;
	gap: ${(p) => p.$gap || 0}px;
`;

const WindowButtons = styled.div`
	display: flex;
	align-items: center;
	gap: 18px;
	margin-left: 76px;
`;

const IconButton = styled.button`
	display: flex;
	align-items: center;
	justify-content: center;
	gap: 4px;
`;

const AppBadge = styled.button`
	display: flex;
	flex-direction: column;
	align-items: center;
	gap: 2px;
	margin-right: 2px;
	font-size: 11px;
	line-height: 12px;
	color: #4a78b8;
`;

const SelectWrap = styled.label`
	position: relative;
	display: flex;
	align-items: center;
	gap: 4px;
	height: ${(p) => p.$h || 26}px;
	width: ${(p) => (p.$w ? p.$w + "px" : "auto")};
	padding: 0 4px;
	background: ${(p) => p.$bg || "#3b4453"};
	border: ${(p) => (p.$line ? "1px solid #252b34" : 0)};
	color: ${(p) => p.$color || "inherit"};

	select {
		flex: 1;
		min-width: 0;
		height: 100%;
		appearance: none;
		outline: 0;
	}
	> i {
		position: absolute;
		right: 4px;
		top: calc(50% - 2px);
		pointer-events: none;
	}
`;

const DocTitle = styled.div`
	display: flex;
	gap: 16px;
	white-space: nowrap;
`;

const ShareLink = styled.button`
	display: flex;
	align-items: center;
	gap: 6px;
	margin-left: 7px;
	color: #a9d3f4;
`;

const KeywordSearch = styled.input`
	width: 223px;
	height: 26px;
	padding: 0 4px;
	background: #465062;
	font-size: 13px;
	font-style: italic;

	&::placeholder {
		color: #b4b9c1;
	}
`;

const Divider = styled.span`
	width: 1px;
	height: ${(p) => p.$h || 22}px;
	background: ${(p) => p.$c || "#4b5361"};
`;

const MenuTabs = styled.nav`
	display: flex;
	height: 25px;
	padding-left: 6px;
	gap: 1px;
	align-items: stretch;
`;

const MenuTab = styled.button`
	padding: 0 12px;
	line-height: 25px;
	white-space: nowrap;
	color: ${(p) => (p.$on ? "#f2f3f4" : "#a9aeb5")};
	background: ${(p) => (p.$on ? "#3b4453" : "none")};
`;

const PanelToggle = styled.button`
	display: flex;
	align-items: center;
	gap: 5px;
	margin-left: 26px;

	span {
		width: 19px;
		height: 9px;
		background: #f2f2f2;
		color: #444;
		font-size: 7px;
		line-height: 9px;
	}
`;

/* ---------- ribbon ---------- */

const Ribbon = styled.div`
	display: flex;
	height: 124px;
	margin: 0 3px;
	background: #3b4453;
`;

const Panel = styled.section`
	display: flex;
	flex-direction: column;
	flex: none;
	width: ${(p) => p.$w}px;
	padding: 4px 3px 0;
	border-right: ${(p) => (p.$last ? 0 : 1)}px solid #252b34;
	white-space: nowrap;
`;

const PanelBody = styled.div`
	flex: 1;
	display: flex;
	gap: ${(p) => p.$gap || 0}px;
	padding-left: ${(p) => p.$left || 0}px;
`;

const PanelTitle = styled.h2`
	display: flex;
	align-items: center;
	justify-content: center;
	gap: 6px;
	height: 24px;
	margin: 0;
	font-size: 14px;
	font-weight: 400;
`;

const Grid = styled.div`
	display: grid;
	grid-template-columns: ${(p) => p.$cols};
	grid-template-rows: repeat(3, 31px);
	padding-top: 1px;
	align-items: center;
`;

const Tool = styled.button`
	display: flex;
	align-items: center;
	gap: 6px;
	text-align: left;

	i {
		margin-left: 3px;
	}
`;

const BigTool = styled.button`
	display: flex;
	flex-direction: column;
	align-items: center;
	width: ${(p) => p.$w}px;
	height: ${(p) => (p.$on ? 89 : 96)}px;
	margin-top: 1px;
	padding-top: 2px;
	line-height: 20px;
	white-space: normal;
	${(p) =>
		p.$on &&
		css`
			background: #435872;
			border: 1px solid #7cc0f2;
		`}

	svg {
		margin-bottom: ${(p) => p.$mb || 5}px;
	}
`;

const Palette = styled.button`
	display: flex;
	align-items: center;
	justify-content: center;
	width: 28px;
	height: 28px;
	background: ${(p) => (p.$on ? "#3c5068" : "none")};
	border: ${(p) => (p.$on ? "1px solid #6aa9d8" : 0)};
`;

const PaletteGrid = styled.div`
	display: grid;
	grid-template-columns: 28px 28px;
	grid-template-rows: repeat(3, 28px);
	gap: 3px 2px;
	padding: 2px 0 0 2px;
`;

const LayerTools = styled.div`
	display: grid;
	grid-template-columns: repeat(4, 30px) auto;
	grid-template-rows: repeat(2, 31px);
	align-items: center;
	padding: 3px 0 0 4px;
`;

const Swatch = styled.span`
	width: 18px;
	height: 18px;
	margin: 0 2px 0 1px;
	background: #fff;
	border: 1px solid #000;
`;

/* ---------- file tabs ---------- */

const FileTabs = styled.nav`
	display: flex;
	height: 32px;
	padding: 4px 0 0 30px;
`;

const FileTab = styled.div`
	display: flex;
	align-items: center;
	gap: 9px;
	width: ${(p) => (p.$w ? p.$w + "px" : "auto")};
	padding: 0 ${(p) => (p.$on ? 16 : 12)}px 0 12px;
	margin-right: 3px;
	border-radius: 12px 12px ${(p) => (p.$on ? "0 0" : "8px 8px")};
	background: ${(p) => (p.$on ? "#3b4453" : "#2c333f")};
	color: ${(p) => (p.$on ? "#f4f5f6" : "#a5aab2")};
	font-size: ${(p) => (p.$on ? 15 : 14)}px;
	font-weight: ${(p) => (p.$on ? 700 : 400)};
	white-space: nowrap;

	svg {
		stroke: #a5aab2;
	}
`;

const Cross = ({ size = 12 }) => (
	<svg width={size} height={size} viewBox="0 0 10 10" stroke="currentColor" strokeWidth="1.800">
		<path d="M1 1l8 8M9 1L1 9" />
	</svg>
);

const Plus = styled.button`
	width: 28px;
	height: ${(p) => p.$h || 23}px;
	margin: ${(p) => p.$m || "3px 0 0 5px"};
	border-radius: 12px 4px;
	background: #2c333f;
	color: #a5aab2;
	font-size: 20px;
	font-weight: 700;
	line-height: 20px;
`;

const Strip = styled.div`
	height: 5px;
	margin: 0 3px;
	background: #3b4453;
`;

/* ---------- work area ---------- */

const Work = styled.main`
	flex: 1;
	min-height: 0;
	display: grid;
	grid-template-columns: 277px 31px 1fr 37px;
	margin: 0 3px 0 2px;
	background: #3b4453;
`;

const Side = styled.aside`
	display: flex;
	flex-direction: column;
	min-height: 0;
	padding-top: 2px;
	font-family: "Noto Sans", sans-serif;
`;

const PaneHeader = styled.h3`
	display: flex;
	align-items: center;
	height: 27px;
	margin: 0;
	padding-left: 9px;
	gap: 7px;
	border-radius: 4px 6px 0 0;
	background: #2c323e;
	font-size: 14px;
	font-weight: 400;
	flex: none;

	&::before {
		content: "";
		width: 3px;
		height: 11px;
		background: repeating-linear-gradient(#aab0b8 0 1px, transparent 1px 2px);
	}
`;

const TaskBody = styled.div`
	display: flex;
	flex-direction: column;
	height: 231px;
	padding: 8px 11px 0;
	flex: none;
`;

const MapRow = styled.div`
	display: flex;
	align-items: center;
	justify-content: space-between;
	padding: 0 2px;
`;

const TaskTools = styled.div`
	display: flex;
	gap: 10px;
	height: 67px;
	margin-top: 13px;
	padding: 11px 0 0 7px;
	border: 1px solid #2c333f;
`;

const TaskTool = styled.button`
	display: flex;
	flex-direction: column;
	align-items: center;
	justify-content: space-between;
	height: 50px;
	font-size: 13px;
	line-height: 18px;
	color: ${(p) => (p.disabled ? "#737a85" : "#e4e6e9")};
`;

const OrderRow = styled.div`
	display: flex;
	align-items: center;
	gap: 9px;
	height: 34px;
	margin-top: 13px;
	font-size: 13px;
`;

const OrderButton = styled.button`
	display: flex;
	align-items: center;
	gap: 8px;
	height: 34px;
	padding: 0 4px 0 2px;
	background: ${(p) => (p.$on ? "#212830" : "none")};
`;

const MapList = styled.div`
	height: 48px;
	margin-top: 8px;
	padding: 5px;
	border: 1px solid #8b919b;
`;

const MapItem = styled.div`
	display: flex;
	align-items: center;
	height: 36px;
	padding-left: 12px;
	background: #f2f2f2;
	color: #333;

	input {
		appearance: none;
		width: 18px;
		height: 18px;
		margin: 0 6px 0 10px;
		border: 1px solid #777;
		border-radius: 2px;
		background: #fff;
	}
	label {
		flex: 1;
		display: flex;
		align-items: center;
		gap: 14px;
		font-style: italic;
	}
`;

const Check = styled.span`
	position: relative;
	display: flex;

	svg {
		position: absolute;
		left: 13px;
		top: 4px;
		pointer-events: none;
	}
	input:not(:checked) + svg {
		display: none;
	}
`;

const Blank = styled.span`
	width: 60px;
	height: 20px;
	background: #fff;
`;

const Spinner = styled.span`
	display: flex;
	flex-direction: column;
	justify-content: space-around;
	align-items: center;
	width: 21px;
	height: 36px;
	border-left: 1px solid #fff;
`;

const SpaceTools = styled.div`
	display: flex;
	align-items: center;
	gap: 12px;
	height: 37px;
	padding: 0 6px;
	flex: none;

	> :first-child {
		margin-right: auto;
	}
`;

const TreeBox = styled.div`
	display: flex;
	flex: none;
	height: 321px;
	margin-top: 2px;
	border: 1px solid #a4a8ae;
	background: #fff;
	color: #111;
	overflow: hidden;
`;

const Tree = styled.ul`
	flex: 1;
	padding-top: 2px;
	overflow: hidden;
`;

const TreeRow = styled.li`
	display: flex;
	align-items: center;
	height: 24px;
	padding-left: ${(p) => (p.$root ? 11 : 16)}px;
	font-size: ${(p) => (p.$root ? 15 : 14)}px;
	font-weight: ${(p) => (p.$root ? 700 : 400)};
	white-space: nowrap;

	svg + svg,
	> svg {
		margin-right: 8px;
	}
`;

const Guide = styled.span`
	flex: none;
	width: 25px;
	height: 24px;
	border-left: 1px dotted #888;
`;

const Branch = styled.span`
	position: relative;
	flex: none;
	width: 15px;
	height: 24px;
	border-left: 1px dotted #888;

	&::before {
		content: "";
		position: absolute;
		top: 11px;
		left: 0;
		width: 13px;
		border-top: 1px dotted #888;
	}
	button {
		position: absolute;
		left: -6px;
		top: 6px;
	}
`;

const Twig = styled.span`
	flex: none;
	width: 9px;
	border-top: 1px dotted #888;
`;

const Expander = styled.button`
	flex: none;
	display: flex;
	align-items: center;
	justify-content: center;
	width: 11px;
	height: 11px;
	border: 1px solid #666;
	background: #fff;
	color: #222;
`;

const Scroll = styled.div`
	display: flex;
	flex-direction: column;
	align-items: center;
	justify-content: space-between;
	width: 20px;
	padding: 8px 0;
	background: #f0f0f0;

	span {
		width: 19px;
		height: 155px;
		margin: 7px 0 auto;
		background: #cdcdcd;
	}
`;

const Preview = styled.div`
	flex: 1;
	margin-top: 7px;
	border: 1px solid #a4a8ae;
	border-bottom: 0;
`;

const SideTabs = styled.div`
	display: flex;
	flex-direction: column;
	padding: 32px 4px 0 0;
	font-family: "Noto Sans", sans-serif;
`;

const SideTab = styled.button`
	flex: none;
	height: ${(p) => p.$h}px;
	margin-top: ${(p) => p.$mt || 0}px;
	padding: 4px 2px;
	writing-mode: vertical-rl;
	transform: rotate(180deg);
	text-align: center;
	color: ${(p) => (p.$on ? "#f0f1f2" : "#b4b9c0")};
	background: ${(p) => (p.$on ? "#3b4453" : "#2e3541")};
	border: 1px solid #262c36;
	border-right-width: ${(p) => (p.$on ? 0 : 1)}px;
	border-radius: 5px 0 0 5px;
	font-size: 14px;
`;

const Grips = styled.span`
	height: 16px;
	background: repeating-linear-gradient(#262c36 0 1px, #343c49 1px 6px);
`;

/* ---------- drawing canvas ---------- */

const Canvas = styled.div`
	position: relative;
	min-width: 0;
	background: #212830;
	overflow: hidden;

	> svg {
		position: absolute;
		inset: 0;
		width: 100%;
		height: 100%;
	}
`;

const ViewLabel = styled.div`
	position: absolute;
	left: 4px;
	top: 6px;
	font-size: 14px;
	line-height: 20px;
`;

const ViewControls = styled.div`
	position: absolute;
	right: 13px;
	top: 11px;
	display: flex;
	align-items: center;
	gap: 12px;
	color: #f4f4f4;
`;

const Wcs = styled.button`
	position: absolute;
	right: 61px;
	top: 211px;
	display: flex;
	align-items: center;
	justify-content: space-between;
	width: 58px;
	height: 21px;
	padding: 0 5px;
	border: 1px solid #a8abb8;
	border-radius: 5px;
	background: #8a8d9b;
	color: #3c404a;
	font-family: "Liberation Sans", sans-serif;
	font-size: 13px;
`;

const NavBar = styled.div`
	position: absolute;
	right: 4px;
	top: 263px;
	display: flex;
	flex-direction: column;
	align-items: center;
	gap: 5px;
	width: 41px;
	height: 259px;
	padding: 19px 0;
	border: 1px solid #444b52;
	border-radius: 4px;
	background: #5c6265;

	i {
		margin: 3px 0;
	}
`;

const Summary = styled.div`
	position: absolute;
	left: 341px;
	top: 650px;
	width: 459px;
	color: #f4f4f4;
	font-family: "Liberation Mono", monospace;
	font-weight: 700;

	h4 {
		margin: 0;
		font-size: 11px;
		line-height: 14px;
	}
	table {
		width: 100%;
		border-collapse: collapse;
		table-layout: fixed;
		font-size: 8px;
		line-height: 12px;
	}
	th,
	td {
		padding: 0;
		text-align: left;
		white-space: nowrap;
	}
	tr {
		border-bottom: 1px solid #e8e8e8;
	}
	tr:last-child {
		border: 0;
	}
`;

const ToolStrip = styled.div`
	display: flex;
	flex-direction: column;
	align-items: center;
	width: 29px;
	margin-left: 4px;
	overflow: hidden;

	> button {
		flex: none;
		display: flex;
		align-items: center;
		height: 28px;
	}
`;

const StripGrip = styled.span`
	flex: none;
	width: ${(p) => p.$w || 17}px;
	height: 4px;
	margin: ${(p) => p.$m};
	background: repeating-linear-gradient(90deg, #aab0b8 0 1px, #3b4453 1px 3px);
`;

const StripLine = styled.hr`
	flex: none;
	width: 25px;
	height: 2px;
	margin: 2px 0;
	border: 0;
	background: #f0f0f0;
`;

/* ---------- command line ---------- */

const Command = styled.div`
	position: absolute;
	z-index: 3;
	left: 622px;
	right: 351px;
	bottom: 40px;
	display: grid;
	grid-template-columns: 31px 1fr;
	font-family: "DejaVu Sans Mono", monospace;
	font-size: 15px;
`;

const CommandGrip = styled.div`
	display: flex;
	flex-direction: column;
	align-items: center;
	gap: 13px;
	padding-top: 6px;
	background: #2a303b;
	color: #d4d6d9;
`;

const History = styled.div`
	height: 44px;
	padding: 3px;
	border-bottom: 1px solid #333;
	background: rgba(164, 165, 166, 0.92);
	color: #16181b;
	line-height: 19px;
`;

const Prompt = styled.label`
	display: flex;
	align-items: center;
	gap: 3px;
	height: 24px;
	padding: 0 6px;
	background: rgba(197, 198, 199, 0.94);

	input {
		flex: 1;
		margin-left: 6px;
		font-style: italic;
		outline: 0;
	}
	input::placeholder {
		color: #55585c;
		opacity: 1;
	}
`;

/* ---------- status bar ---------- */

const Status = styled.footer`
	display: flex;
	justify-content: space-between;
	align-items: flex-start;
	height: 39px;
	padding: 1px 4px 0 18px;
	border-top: 1px solid #3b4453;
`;

const LayoutTab = styled.button`
	height: 21px;
	padding: 0 12px;
	margin-right: 4px;
	border-radius: 0 0 10px 10px;
	background: ${(p) => (p.$on ? "#3b4453" : "#2c333f")};
	color: ${(p) => (p.$on ? "#fff" : "#a5aab2")};
	font-weight: ${(p) => (p.$on ? 700 : 400)};
	line-height: 20px;
`;

const Tabs = styled.div`
	display: flex;
	align-items: flex-start;
`;

const Segment = styled.div`
	display: flex;
	align-items: center;
	justify-content: ${(p) => (p.$end ? "flex-end" : "space-around")};
	width: ${(p) => p.$w}px;
	height: 30px;
	padding: 0 ${(p) => p.$pad || 0}px;
	background: #3b4453;
	white-space: nowrap;
`;

const Toggle = styled.button`
	display: flex;
	align-items: center;
	justify-content: center;
	width: 28px;
	height: 28px;
	background: ${(p) => (p.$on ? "#5b8cc0" : "none")};
`;

/* ---------- balloon ---------- */

const Balloon = styled.div`
	position: absolute;
	z-index: 2;
	right: 46px;
	bottom: 50px;
	width: 316px;
	height: 105px;
	padding: 13px 10px 0 17px;
	border: 1px solid #000;
	border-radius: 18px;
	background: #ffffe1;
	color: #222;
	font-size: 14px;
	line-height: 20px;

	> svg {
		position: absolute;
		top: 102px;
		left: 216px;
	}
	p {
		margin: 8px 0;
	}
	a {
		color: #1c1ca8;
	}
`;

const BalloonHead = styled.div`
	display: flex;
	align-items: center;
	gap: 13px;
	margin-left: -5px;

	strong {
		flex: 1;
		color: #000;
		white-space: nowrap;
	}
	button {
		display: flex;
		align-items: center;
		justify-content: center;
		width: 20px;
		height: 20px;
		border: 1px solid #999;
		background: #f0f0f0;
		color: #000;
	}
`;

/* ---------- taskbar ---------- */

const Taskbar = styled.footer`
	display: flex;
	align-items: center;
	height: 50px;
	background: #1b1e20;
	color: #fff;
`;

const StartButton = styled.button`
	display: flex;
	align-items: center;
	justify-content: center;
	width: 60px;
	height: 50px;
`;

const TaskSearch = styled.label`
	display: flex;
	align-items: center;
	width: 360px;
	height: 49px;
	margin-top: 1px;
	padding-left: 15px;
	background: #f2f2f2;

	input {
		flex: 1;
		min-width: 0;
		margin-left: 15px;
		font-size: 18px;
		outline: 0;
	}
	input::placeholder {
		color: #333;
		opacity: 1;
	}
`;

const TaskApps = styled.div`
	display: flex;
	height: 50px;

	> :first-child {
		margin-right: 3px;
	}
`;

const TaskApp = styled.button`
	position: relative;
	display: flex;
	align-items: center;
	justify-content: center;
	width: ${(p) => p.$w || 62}px;
	background: ${(p) => (p.$on ? "#4a4d4f" : "none")};

	&::after {
		content: "";
		position: absolute;
		bottom: 0;
		left: ${(p) => (p.$on ? 0 : 6)}px;
		right: ${(p) => (p.$on ? 0 : 6)}px;
		height: 3px;
		background: ${(p) => (p.$open ? "#76b4e4" : "none")};
	}
`;

const Count = styled.span`
	position: absolute;
	right: ${(p) => p.$r || 5}px;
	top: 24px;
	width: 20px;
	height: 20px;
	border: 1px solid #aaa;
	border-radius: 50%;
	background: rgba(27, 30, 32, 0.8);
	font: 14px/18px "DejaVu Sans", sans-serif;
	text-align: center;
`;

const Tray = styled.div`
	display: flex;
	align-items: center;
	gap: 10px;
	margin-left: auto;
	font-family: "Noto Sans", "DejaVu Sans", sans-serif;
`;

const Weather = styled.button`
	display: flex;
	align-items: center;
	gap: 10px;
	margin-right: 20px;
	font-size: 16px;

	b {
		width: 30px;
		height: 30px;
		border-radius: 50%;
		background: linear-gradient(#f6a63a, #ee7420);
		font-size: 11px;
		line-height: 30px;
	}
`;

const Language = styled.button`
	margin-left: 21px;
`;

const Clock = styled.time`
	width: 74px;
	margin-left: 14px;
	text-align: center;
	font-size: 14px;
	line-height: 22px;
	white-space: nowrap;
`;

const Notify = styled.button`
	position: relative;
	width: 40px;
	height: 50px;
	margin: 0 13px 0 8px;
	display: flex;
	align-items: center;
`;

const Watermark = styled.div`
	position: fixed;
	z-index: 9;
	left: 843px;
	bottom: 22px;
	width: 234px;
	pointer-events: none;
	text-align: center;
	color: rgba(190, 192, 194, 0.42);
	font-family: "DejaVu Sans", sans-serif;
	font-weight: 700;

	div:first-child {
		font-size: 68px;
		line-height: 78px;
	}
	div:last-child {
		font: 700 39px/44px "Roboto", sans-serif;
	}
`;

/* ---------- data ---------- */

const MENU = ["Home", "Insert", "Annotate", "Modify", "Analyze", "View", "Manage", "Output", "Survey", "Rail", "Transparent", "InfraWorks", "Collaborate", "Help", "Add-ins", "Express Tools", "Featured Apps"];

const TREE = [
	["tPoints", "Points", "dot"],
	["tPointGroups", "Point Groups", "plus"],
	["tSurfaces", "Surfaces", "plus"],
	["tAlignments", "Alignments", "plus"],
	["tFeature", "Feature Lines"],
	["tSites", "Sites"],
	["tCatch", "Catchments"],
	["tPipe", "Pipe Networks", "plus"],
	["tPressure", "Pressure Networks"],
	["tBridges", "Bridges"],
	["tCorridors", "Corridors"],
	["tAssemblies", "Assemblies", "plus"],
	["tBridges", ""],
];

const STRIP = ["r1", "r2", "r3", "r4", "pageGrid", "globeGrid", "globeNet", "ptGrid", "ptText", "ptArrow", "ptZoom", "r12", "r13", "-", "ptFilter", "-", "r15", "r16", "r17", "-", "r18", "r19", "r20", "r21", "r22", "r23", "r24"];

const APPS = [
	["whatsapp", 1],
	["telegram"],
	["chrome"],
	["store"],
	["edge"],
	["mail"],
	["firefox"],
	["copilot"],
	["explorer", 1],
	["excel", 1],
	["chromeUser", 1],
	["globe", 1],
	["autocad", 1],
];

// outlined parcels on the site: x, y, width, height
const rows = [[379, 10], [394, 9], [408, 9], [424, 10], [435, 10], [453, 9]];
const PARCELS = [
	...[765, 785, 804, 917, 936, 956].flatMap((x) => rows.map(([y, h]) => [x, y, 10, h])),
	...[765, 783, 801, 917, 935, 953].map((x) => [x, 475, 12, 12]),
	[742, 401, 20, 20], [969, 401, 20, 20],
	...[498, 518, 537].flatMap((y) => [822, 833, 887, 898].map((x) => [x, y, 11, 12])),
	[745, 498, 13, 12], [973, 498, 12, 12], [745, 537, 13, 13], [973, 537, 12, 13],
	[804, 500, 9, 9], [917, 500, 9, 9],
	...[775, 795, 927, 946].map((x) => [x, 539, 9, 9]),
	...[775, 794, 926, 946].flatMap((x) => [[x, 557, 10, 10], [x, 567, 10, 10], [x, 607, 10, 10], [x, 629, 9, 9]]),
	...[774, 793, 926, 944].map((x) => [x, 582, 12, 12]),
	[727, 563, 25, 70], [978, 563, 26, 70],
	[765, 646, 61, 36], [917, 646, 61, 36],
	[742, 679, 20, 20], [964, 683, 31, 12],
];

// runs of surface triangle edges: from segment, to segment, how many
const RUNS = [
	[694, 330, 694, 400, 720, 308, 790, 308, 12],
	[694, 370, 694, 470, 780, 308, 866, 308, 20],
	[694, 450, 700, 480, 765, 390, 866, 308, 18],
	[700, 476, 706, 480, 765, 380, 810, 475, 22],
	[694, 320, 694, 352, 694, 308, 760, 308, 8],
	[694, 352, 760, 308, 765, 379, 812, 379, 14],
	[765, 379, 805, 379, 835, 308, 868, 308, 14],
	[868, 308, 872, 310, 917, 380, 945, 380, 18],
	[868, 308, 900, 308, 956, 380, 1036, 470, 24],
	[890, 308, 950, 308, 1010, 400, 1036, 490, 20],
	[930, 308, 990, 308, 1036, 370, 1036, 440, 14],
	[990, 308, 1030, 308, 1036, 320, 1036, 380, 8],
	[965, 380, 965, 470, 1024, 470, 1036, 482, 20],
	[814, 425, 814, 480, 850, 415, 917, 412, 14],
	[705, 474, 705, 486, 917, 418, 917, 486, 30],
	[814, 440, 814, 480, 917, 415, 917, 465, 16],
	[694, 480, 694, 500, 1036, 470, 1036, 500, 18],
	[694, 495, 694, 530, 1036, 490, 1036, 540, 28],
	[694, 525, 694, 560, 1036, 530, 1036, 560, 22],
	[700, 482, 704, 484, 880, 500, 970, 550, 14],
	[1020, 480, 1036, 484, 760, 500, 860, 556, 14],
	[758, 500, 758, 556, 1036, 528, 1036, 532, 14],
	[830, 480, 940, 480, 1036, 520, 1036, 536, 16],
	[752, 560, 752, 590, 926, 560, 926, 640, 30],
	[752, 590, 752, 633, 917, 655, 917, 680, 28],
	[804, 560, 804, 635, 926, 590, 926, 665, 24],
	[694, 560, 700, 590, 727, 563, 727, 633, 12],
	[694, 560, 720, 580, 735, 698, 765, 698, 16],
	[694, 600, 694, 698, 727, 640, 742, 698, 10],
	[940, 594, 980, 594, 945, 645, 975, 645, 14],
	[978, 640, 1004, 640, 970, 698, 980, 646, 14],
	[1036, 560, 1036, 690, 978, 698, 1000, 650, 26],
	[1004, 565, 1004, 633, 1036, 540, 1036, 600, 12],
	[762, 685, 762, 699, 971, 690, 971, 712, 12],
	[826, 660, 826, 682, 917, 682, 971, 700, 8],
	[736, 705, 736, 738, 971, 700, 971, 738, 10],
	[736, 732, 736, 740, 971, 734, 971, 740, 7],
	[736, 735, 736, 775, 800, 775, 860, 849, 20],
	[736, 750, 736, 840, 770, 849, 850, 849, 20],
	[736, 735, 740, 740, 779, 745, 779, 774, 8],
	[971, 740, 971, 790, 907, 770, 907, 815, 18],
	[971, 750, 971, 835, 860, 849, 930, 849, 22],
	[907, 752, 907, 800, 930, 742, 971, 742, 10],
	[790, 774, 855, 774, 830, 849, 860, 849, 8],
];

let seed = 123;
const rnd = () => {
	seed = (seed * 16807) % 2147483647;
	return seed / 2147483647;
};

const runPath = ([ax, ay, bx, by, cx, cy, dx, dy, n]) => {
	let d = "";
	for (let i = 0; i < n; i++) {
		const s = rnd();
		const t = Math.min(1, Math.max(0, s + (rnd() - 0.5) * 0.8));
		d += `M${(ax + (bx - ax) * s).toFixed(1)} ${(ay + (by - ay) * s).toFixed(1)}L${(cx + (dx - cx) * t).toFixed(1)} ${(cy + (dy - cy) * t).toFixed(1)}`;
	}
	return d;
};

// a strip of small triangles zigzagging between two levels
const zigzag = (x0, x1, y0, y1, step) => {
	let d = "";
	let px = x0;
	let py = y0 + rnd() * 6;
	let up = false;
	for (let x = x0 + step; x < x1; x += step * (0.5 + rnd())) {
		const y = (up ? y0 : y1) + (rnd() - 0.5) * 8;
		d += `M${px.toFixed(1)} ${py.toFixed(1)}L${x.toFixed(1)} ${y.toFixed(1)}`;
		px = x;
		py = y;
		up = !up;
	}
	return d;
};

const MESH =
	RUNS.map(runPath).join("") +
	[
		[694, 800, 310, 345, 9], [694, 800, 340, 375, 12], [930, 1036, 310, 350, 10],
		[694, 765, 492, 530, 10], [694, 765, 525, 560, 9], [960, 1036, 485, 525, 9], [960, 1036, 520, 562, 9],
		[814, 920, 445, 475, 8], [820, 925, 485, 520, 7], [860, 925, 560, 600, 7], [830, 915, 640, 690, 12],
		[736, 971, 690, 735, 14], [736, 971, 702, 720, 18], [736, 840, 815, 849, 10], [905, 971, 745, 790, 9],
		[694, 735, 600, 690, 8], [1004, 1036, 560, 640, 7], [740, 860, 778, 820, 16],
	].map((a) => zigzag(...a)).join("");

const SITE = "M695 307H1035q2 0 2 2V698q0 2-2 2H973v4h-3V735h1V847q0 2-2 2H737q-2 0-2-2V735h1V700H695q-2 0-2-2V309q0-2 2-2z";

const Drawing = () => (
	<svg viewBox="314 225 1562 765" preserveAspectRatio="xMinYMin meet" role="img" aria-label="Site surface">
		<clipPath id="site"><path d={SITE} /></clipPath>
		<path d={MESH} clipPath="url(#site)" fill="none" stroke="#6d6d6d" strokeWidth=".9" />
		<path d="M869 310l11 23 31 55 5 15-44 6-55 4V374l18-20 35-18z" fill="#212830" />
		<path
			d="M867 308l13 25-45 19 7 46 23 1 19-66-3 66M835 352l-13 40 18 5M838 356l27 42M894 309l-5 78 12 1 15 9M843 397l29 12 28-21M818 376l25 21M815 408l28-11 29 12 45-4M815 418l57-9 45-1M865 398l24-10M880 333l-8 76M835 352l45-19"
			fill="none"
			stroke="#777"
		/>
		<path d="M695 666l22 10-22 6M742 848l15-9 9-26 25 17 42-20 10-35M857 787l-4 13 2 37 5 11" fill="none" stroke="#c8c8c8" />
		<path d="M911 567l-5 28 4 38-12 70-18 10M929 308v28h42M1035 318l-28 22-40-26M820 472l12 20M966 467c28 22 28 42 25 70l-8 14M932 690l23 27-22 26M808 500v30" fill="none" stroke="#8a8a8a" />
		<g fill="#212830" stroke="#34c47c" strokeWidth="1.200">
			{PARCELS.map(([x, y, w, h], i) => (
				<rect key={i} x={x + 0.5} y={y + 0.5} width={w - 1} height={h - 1} />
			))}
			<path d="M779.500 743.500H841v-4h56v11h10V815h-4v12h-44V774H779.500z" />
			<path d={SITE} fill="none" strokeWidth="1.600" />
		</g>

		<path d="M402 551l33 103" stroke="#6fd06a" />
		<path d="M389 631l103-35" stroke="#d0605c" />
		<path d="M422 616h6v6h-6z" fill="#212830" stroke="#f0f0f0" />

		<path d="M350 966l-21-57M350 966l58-20M345 961h10v10h-10zM331 890l7 9 8-9M338 899v9M413 931l14 14M427 931l-14 14" fill="none" stroke="#c4c6c9" strokeWidth="1.400" />

		<circle cx="1787" cy="342" r="58" fill="none" stroke="#42484f" strokeWidth="14" />
		<g transform="rotate(-17 1787 342)" fontFamily="Liberation Sans" fontWeight="700" textAnchor="middle">
			<rect x="1760" y="315" width="54" height="54" fill="#a3a5a7" />
			<rect x="1770" y="325" width="34" height="34" fill="#98a2aa" />
			<text x="1787" y="348" fontSize="15" fill="#444b52">TOP</text>
			<g fontSize="22" fill="#a9abad">
				<text x="1784" y="291">N</text>
				<text x="1846" y="348">E</text>
				<text x="1788" y="411">S</text>
				<text x="1727" y="352">W</text>
			</g>
		</g>
	</svg>
);

const ToolButton = ({ icon, label, caret }) => (
	<Tool aria-label={label ? undefined : icon}>
		<Icon name={icon} />
		{label}
		{caret && <Caret />}
	</Tool>
);

const ToolGrid = ({ cols, items }) => (
	<Grid $cols={cols}>
		{items.map(([icon, label, caret]) => (
			<ToolButton key={icon} icon={icon} label={label} caret={caret} />
		))}
	</Grid>
);

const RibbonBar = () => (
	<Ribbon>
		<Panel $w={143}>
			<PanelBody>
				<BigTool $w={73} $on>
					<Icon name="tools" size={42} h={40} />
					Toolspace
				</BigTool>
				<PaletteGrid>
					{["toolbook", "gearTool", "survey", "toolbox", "sheets", "props"].map((n, i) => (
						<Palette key={n} $on={i < 4} aria-label={n}>
							<Icon name={n} />
						</Palette>
					))}
				</PaletteGrid>
			</PanelBody>
			<PanelTitle>Palettes <Caret $s={5} /></PanelTitle>
		</Panel>
		<Panel $w={67}>
			<PanelBody>
				<BigTool $w={60} $mb={9}>
					<Icon name="cube" size={38} />
					Project Explorer
				</BigTool>
			</PanelBody>
			<PanelTitle>Explore</PanelTitle>
		</Panel>
		<Panel $w={163}>
			<PanelBody $left={29}>
				<ToolGrid cols="auto" items={[["points", "Points", 1], ["surfaces", "Surfaces", 1], ["traverse", "Traverse", 1]]} />
			</PanelBody>
			<PanelTitle>Create Ground Data <Caret $s={5} /></PanelTitle>
		</Panel>
		<Panel $w={402}>
			<PanelBody $left={4}>
				<ToolGrid
					cols="133px 122px auto"
					items={[
						["parcel", "Parcel", 1], ["alignment", "Alignment", 1], ["intersections", "Intersections", 1],
						["featureLine", "Feature Line", 1], ["profile", "Profile", 1], ["assembly", "Assembly", 1],
						["grading", "Grading", 1], ["corridor", "Corridor", 1], ["pipe", "Pipe Network", 1],
					]}
				/>
			</PanelBody>
			<PanelTitle>Create Design <Caret $s={5} /></PanelTitle>
		</Panel>
		<Panel $w={168}>
			<PanelBody $left={13}>
				<ToolGrid cols="auto" items={[["profileView", "Profile View", 1], ["sampleLines", "Sample Lines"], ["sectionViews", "Section Views", 1]]} />
			</PanelBody>
			<PanelTitle>Profile &amp; Section Views</PanelTitle>
		</Panel>
		<Panel $w={148}>
			<PanelBody $left={4}>
				<ToolGrid
					cols="46px 48px auto"
					items={[
						["drawLine", "", 1], ["drawArc", "", 1], ["drawPoly", ""],
						["drawXline", "", 1], ["drawCircle", "", 1], ["drawRect", "", 1],
						["drawSpline", "", 1], ["drawEllipse", "", 1], ["drawHatch", "", 1],
					]}
				/>
			</PanelBody>
			<PanelTitle>Draw <Caret $s={5} /></PanelTitle>
		</Panel>
		<Panel $w={316}>
			<PanelBody $left={4}>
				<ToolGrid
					cols="91px 88px 95px auto"
					items={[
						["move", "Move"], ["rotate", "Rotate"], ["trim", "Trim", 1], ["erase", ""],
						["copy", "Copy"], ["mirror", "Mirror"], ["fillet", "Fillet", 1], ["box3d", ""],
						["stretch", "Stretch"], ["scale", "Scale"], ["array", "Array", 1], ["offset", ""],
					]}
				/>
			</PanelBody>
			<PanelTitle>Modify <Caret $s={5} /></PanelTitle>
		</Panel>
		<Panel $w={342}>
			<PanelBody>
				<BigTool $w={74}>
					<Icon name="layerProps" size={41} />
					Layer Properties
				</BigTool>
				<div>
					<SelectWrap $h={28} $w={260} $bg="#4a566a" $line>
						<Icon name="bulb" />
						<Icon name="sun" />
						<Icon name="unlock" />
						<Swatch />
						<select aria-label="Layer"><option>0</option></select>
						<Caret $s={5} />
					</SelectWrap>
					<LayerTools>
						{["layOff", "layIso", "layFreeze", "layLock"].map((n) => <ToolButton key={n} icon={n} />)}
						<ToolButton icon="layCurrent" label="Make Current" />
						{["layOn", "layUniso", "layThaw", "layUnlock"].map((n) => <ToolButton key={n} icon={n} />)}
						<ToolButton icon="layMatch" label="Match Layer" />
					</LayerTools>
				</div>
			</PanelBody>
			<PanelTitle>Layers <Caret $s={5} /></PanelTitle>
		</Panel>
		<Panel $w={98} $last>
			<PanelBody $left={9} $gap={16}>
				<BigTool $w={41}>
					<Icon name="paste" size={41} />
					Paste
					<Caret />
				</BigTool>
				<ToolGrid cols="auto" items={[["cut"], ["copyClip"], ["matchProps"]]} />
			</PanelBody>
			<PanelTitle>Clipboard</PanelTitle>
		</Panel>
	</Ribbon>
);

const Chevron = ({ up, w = 11 }) => (
	<svg width={w} height={w * 0.6} viewBox="0 0 10 6" fill="none" stroke="#444" strokeWidth="1.600">
		<path d={up ? "M1 5l4-4 4 4" : "M1 1l4 4 4-4"} />
	</svg>
);

const LeftPane = () => (
	<Side>
		<PaneHeader>TASK PANE</PaneHeader>
		<TaskBody>
			<MapRow>
				<label htmlFor="map">Display Map:</label>
				<SelectWrap $w={159} $h={23} $bg="#4a566a" $line>
					<select id="map"><option>Default</option></select>
					<Caret $s={4} />
				</SelectWrap>
			</MapRow>
			<TaskTools>
				<TaskTool><Icon name="database" size={27} h={29} />Data</TaskTool>
				<TaskTool disabled><Icon name="brush" size={28} />Style</TaskTool>
				<TaskTool disabled><Icon name="table" size={29} />Table</TaskTool>
				<TaskTool><Icon name="tools" size={31} />Tools</TaskTool>
				<TaskTool><Icon name="maps" size={30} />Maps</TaskTool>
			</TaskTools>
			<OrderRow>
				<OrderButton $on><Icon name="groups" />Groups</OrderButton>
				<Divider $h={32} $c="#6b727e" />
				<OrderButton><Icon name="drawOrder" />Draw Order</OrderButton>
			</OrderRow>
			<MapList>
				<MapItem>
					<Chevron w={18} />
					<Check>
						<input type="checkbox" id="base" defaultChecked />
						<svg width="12" height="10" viewBox="0 0 12 10" fill="none" stroke="#444" strokeWidth="1.600"><path d="M1 5l4 4 6-8" /></svg>
					</Check>
					<label htmlFor="base"><Blank />Map Base</label>
					<Spinner><Chevron up w={9} /><Chevron w={9} /></Spinner>
				</MapItem>
			</MapList>
		</TaskBody>
		<PaneHeader>TOOLSPACE</PaneHeader>
		<SpaceTools>
			<Icon name="greenCube" />
			<Icon name="treeView" />
			<Icon name="panorama" />
			<Icon name="help" />
		</SpaceTools>
		<SelectWrap $h={24} $bg="#e1e1e1" $color="#111">
			<select aria-label="View"><option>Active Drawing View</option></select>
			<Chevron />
		</SelectWrap>
		<TreeBox>
			<Tree>
				<TreeRow $root>
					<Expander aria-label="Collapse"><svg width="7" height="7" stroke="currentColor"><path d="M0 3.500h7" /></svg></Expander>
					<Twig />
					<Icon name="docSheet" />
					LEVELING TO 123
				</TreeRow>
				{TREE.map(([icon, label, node], i) => (
					<TreeRow key={i}>
						<Guide />
						<Branch>
							{node && (
								<Expander aria-label="Expand">
									<svg width="7" height="7" stroke="currentColor">
										{node === "plus" ? <path d="M0 3.500h7M3.500 0v7" /> : <circle cx="3.500" cy="3.500" r="2" fill="currentColor" />}
									</svg>
								</Expander>
							)}
						</Branch>
						<Icon name={icon} size={19} />
						{label}
					</TreeRow>
				))}
			</Tree>
			<Scroll><Chevron up /><span /><Chevron /></Scroll>
		</TreeBox>
		<Preview />
	</Side>
);

const StatusBar = () => (
	<Status>
		<Tabs>
			<LayoutTab $on>Model</LayoutTab>
			<LayoutTab>Layout1</LayoutTab>
			<LayoutTab>Layout2</LayoutTab>
			<Plus $h={21} $m="0 0 0 3px">+</Plus>
		</Tabs>
		<Bar $gap={3}>
			<Segment $w={223} $pad={7} $end>621059.596, 800794.328, 0.000</Segment>
			<Segment $w={59}>MODEL</Segment>
			<Segment $w={79}><Icon name="grid" /><Icon name="snap" /><Caret $s={5} /></Segment>
			<Segment $w={130}>
				<Icon name="ortho" /><Icon name="polar" /><Caret $s={5} /><Icon name="iso" /><Caret $s={5} />
			</Segment>
			<Segment $w={80}>
				<Toggle $on aria-label="Tracking"><Icon name="otrack" /></Toggle>
				<Toggle $on aria-label="Snap"><Icon name="osnap" /></Toggle>
				<Caret $s={5} />
			</Segment>
			<Segment $w={156}>
				<Toggle $on aria-label="Annotation"><Icon name="annoVis" /></Toggle>
				<Icon name="annoAuto" /><Icon name="anno" />
				<Bar $gap={6}>1:1000 <Caret $s={5} /></Bar>
			</Segment>
			<Segment $w={82}><Icon name="gear" /><Caret $s={5} /><Icon name="plus" /></Segment>
			<Segment $w={114}><Icon name="elevation" />3.500<Icon name="shapes" /></Segment>
			<Segment $w={68}><Icon name="plotter" /><Icon name="shield" size={24} /></Segment>
			<Segment $w={60}><Icon name="clean" /><Icon name="menu" /></Segment>
		</Bar>
	</Status>
);

const Luggage = () => (
	<svg width="94" height="49" viewBox="4 0 94 49">
		<path d="M0 49c12-12 60-14 98-10v10z" fill="#c9c9cc" />
		<path d="M4 15l8-2 3-3 7-1 3 3 5 1 1 15-25 5z" fill="#8c8f94" />
		<circle cx="18" cy="22" r="7" fill="#3a3d42" />
		<circle cx="18" cy="22" r="3" fill="#7a8088" />
		<path d="M39 16v-5h7v5M56 14V4h8v11" fill="none" stroke="#444" strokeWidth="2" />
		<rect x="51" y="13" width="18" height="31" rx="3" fill="#5cc8a8" />
		<path d="M57 16v25M63 16v25" stroke="#48a88c" />
		<rect x="33" y="16" width="19" height="31" rx="3" fill="#ee9c98" />
		<path d="M39 19v25M45 19v25" stroke="#d88480" />
		<path d="M70 16c0-8 5-8 10-7s10 5 9 9c5 1 6 6-2 9-8 0-20-6-17-11z" fill="#dcb468" />
		<path d="M71 15c4 6 11 8 18 6" fill="none" stroke="#f4ce40" strokeWidth="4" />
	</svg>
);

export default function App() {
	return (
		<Desktop>
			<GlobalStyle />
			<Frame>
				<TitleBar>
					<Bar $gap={10}>
						<Bar $gap={4}>
							<Icon name="logo" size={22} />
							<AppBadge>C3D<Caret $s={4} /></AppBadge>
						</Bar>
						{["newFile", "open", "save", "openWeb", "saveWeb", "print"].map((n) => (
							<IconButton key={n} aria-label={n}><Icon name={n} /></IconButton>
						))}
						<IconButton aria-label="Undo"><Icon name="undo" /></IconButton>
						<Caret />
						<IconButton aria-label="Redo"><Icon name="redo" /></IconButton>
						<Caret $c="#8b9199" />
						<Bar $gap={5}>
							<SelectWrap $w={223}>
								<Icon name="gear" />
								<select aria-label="Workspace"><option>Civil 3D</option></select>
								<Caret $s={4} />
							</SelectWrap>
							<Caret $s={4} />
							<ShareLink><Icon name="share" />Share</ShareLink>
						</Bar>
					</Bar>
					<DocTitle>
						<span>Autodesk Civil 3D 2022</span>
						<span>LEVELING TO 123.dwg</span>
					</DocTitle>
					<Bar $gap={10}>
						<Bar $gap={7}>
							<svg width="5" height="10"><path d="M0 0l5 5-5 5z" fill="#fff" /></svg>
							<KeywordSearch placeholder="Type a keyword or phrase" aria-label="Keyword" />
							<Icon name="find" size={18} />
						</Bar>
						<Bar $gap={6}><Icon name="user" /><span>Sayedsaeed30...</span><Caret /></Bar>
						<Icon name="cart" />
						<Icon name="autodesk" />
						<Caret />
						<Divider />
						<Icon name="help" />
						<Caret />
						<WindowButtons>
							<IconButton aria-label="Minimize"><svg width="11" height="12"><path d="M0 10.500h11" stroke="#eee" strokeWidth="3" /></svg></IconButton>
							<IconButton aria-label="Maximize"><svg width="16" height="14"><path d="M1 1h14v12H1z" fill="none" stroke="#eee" strokeWidth="1.600" /></svg></IconButton>
							<IconButton aria-label="Close"><Cross size={15} /></IconButton>
						</WindowButtons>
					</Bar>
				</TitleBar>
				<MenuTabs>
					{MENU.map((m, i) => <MenuTab key={m} $on={i === 0}>{m}</MenuTab>)}
					<PanelToggle><span>▲</span><Caret /></PanelToggle>
				</MenuTabs>
				<RibbonBar />
				<FileTabs>
					<FileTab $w={153}>Start</FileTab>
					<FileTab>2012202211111111111111* <Cross /></FileTab>
					<FileTab>Grid Level PP04 <Cross /></FileTab>
					<FileTab $on>LEVELING TO 123* <Cross /></FileTab>
					<Plus>+</Plus>
				</FileTabs>
				<Strip />
				<Work>
					<LeftPane />
					<SideTabs>
						<SideTab $h={91} $on>Display M...</SideTab>
						<SideTab $h={92}>Map Explo...</SideTab>
						<Grips />
						<SideTab $h={114} $mt={59} $on>Prospector</SideTab>
						<SideTab $h={114}>Settings</SideTab>
						<SideTab $h={114}>Survey</SideTab>
						<SideTab $h={114}>Toolbox</SideTab>
					</SideTabs>
					<Canvas>
						<Drawing />
						<ViewLabel>[−][Top][2D Wireframe]</ViewLabel>
						<ViewControls>
							<svg width="13" height="13"><path d="M0 11h13" stroke="#f4f4f4" strokeWidth="3" /></svg>
							<svg width="13" height="13" fill="none" stroke="#f4f4f4" strokeWidth="2"><path d="M1 4h8v8H1zM4 1h8v8" /></svg>
							<Cross size={13} />
						</ViewControls>
						<Wcs>WCS<svg width="10" height="6" fill="none" stroke="#c4c7d2"><path d="M1 1h8l-4 4z" /></svg></Wcs>
						<NavBar>
							<Icon name="wheel" size={30} />
							<Caret $c="#3a3f47" />
							<Icon name="hand" size={30} />
							<Icon name="zoomExt" size={30} />
							<Caret $c="#3a3f47" />
							<Icon name="orbit" size={30} />
							<Caret $c="#3a3f47" />
							<Icon name="motion" size={30} />
						</NavBar>
						<Summary>
							<h4>Cut/Fill Summary</h4>
							<table>
								<colgroup>
									<col width="38" /><col width="57" /><col width="58" /><col width="57" /><col width="67" /><col width="76" /><col />
								</colgroup>
								<tbody>
									<tr><th>Name</th><th>Cut Factor</th><th>Fill Factor</th><th>2d Area</th><th>Cut</th><th>Fill</th><th>Net</th></tr>
									<tr><td>123 V</td><td>1.000</td><td>1.000</td><td>4999.59sq.m</td><td>29.26 Cu. M.</td><td>7942.29 Cu. M.</td><td>7913.04 Cu. M.&lt;Fill&gt;</td></tr>
									<tr><td>Totals</td><td /><td /><td>4999.59sq.m</td><td>29.26 Cu. M.</td><td>7942.29 Cu. M.</td><td>7913.04 Cu. M.&lt;Fill&gt;</td></tr>
								</tbody>
							</table>
						</Summary>
					</Canvas>
					<ToolStrip>
						<StripGrip $m="4px 0 2px" />
						{STRIP.map((n, i) =>
							n === "-" ? <StripLine key={i} /> : <button key={n} aria-label={n}><Icon name={n} size={19} /></button>
						)}
						<StripGrip $m="6px 0 4px" />
						<button aria-label="Filter"><Icon name="ptFilter" size={19} /></button>
						<button aria-label="Sheet filter"><Icon name="r26" size={19} /></button>
					</ToolStrip>
				</Work>
				<StatusBar />
				<Command>
					<CommandGrip>
						<StripGrip $m="0" $w={22} />
						<Cross size={12} />
						<Icon name="wrench" size={19} />
					</CommandGrip>
					<div>
						<History>Command:<br />Command:</History>
						<Prompt>
							<Icon name="prompt" />
							<Caret $s={4} $c="#444" />
							<input placeholder="Type a command" aria-label="Command" />
							<svg width="10" height="5"><path d="M0 5l5-5 5 5z" fill="#444" /></svg>
						</Prompt>
					</div>
				</Command>
				<Balloon>
					<BalloonHead>
						<Icon name="info" />
						<strong>Plot and Publish Job Complete</strong>
						<button aria-label="Dismiss"><Cross size={12} /></button>
					</BalloonHead>
					<p>No errors or warnings found</p>
					<a href="#details">Click to view plot and publish details...</a>
					<svg width="28" height="27" viewBox="0 0 28 27">
						<path d="M3 1l22 24V1" fill="#ffffe1" />
						<path d="M3 1l22 24V1" fill="none" stroke="#000" />
					</svg>
				</Balloon>
			</Frame>
			<Taskbar>
				<StartButton aria-label="Start"><Icon name="windows" /></StartButton>
				<TaskSearch>
					<Icon name="taskSearch" />
					<input placeholder="Type here to search" />
					<Luggage />
				</TaskSearch>
				<TaskApps>
					<TaskApp aria-label="Task view" $w={60}><Icon name="taskView" /></TaskApp>
					{APPS.map(([n, open], i) => (
						<TaskApp key={n} $open={open} $on={n === "autocad"} aria-label={n}>
							<Icon name={n} size={n === "telegram" ? 28 : 30} />
							{i === 0 && <Count>١</Count>}
						</TaskApp>
					))}
				</TaskApps>
				<Tray>
					<Weather><b>UV</b><span dir="rtl">أشعـ...</span></Weather>
					{["chevronUp", "meet", "cloud", "battery", "wifi", "mute"].map((n) => <Icon key={n} name={n} />)}
					<Icon name="pen" />
					<Language>ع</Language>
					<Clock>02:28 م<br />٢٠٢٥/٠٩/٢٧</Clock>
					<Notify aria-label="Notifications"><Icon name="notify" /><Count $r={2}>٦</Count></Notify>
				</Tray>
			</Taskbar>
			<Watermark>
				<div>مستقل</div>
				<div>mostaql.com</div>
			</Watermark>
		</Desktop>
	);
}
